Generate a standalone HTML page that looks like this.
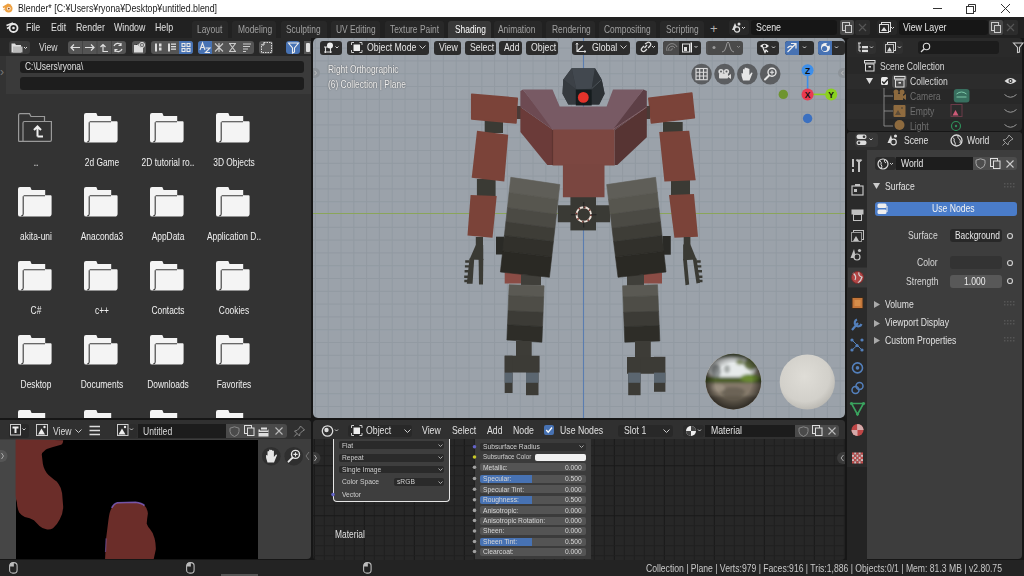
<!DOCTYPE html><html><head><meta charset="utf-8"><style>
*{margin:0;padding:0;box-sizing:border-box}
html,body{width:1024px;height:576px;overflow:hidden;background:#161616;font-family:"Liberation Sans",sans-serif;color:#d9d9d9;font-size:10px}
.a{position:absolute}
.t{position:absolute;white-space:nowrap;line-height:1.15;transform-origin:0 50%}
svg{position:absolute;overflow:visible}
</style></head><body>
<div class="a" style="left:0px;top:0px;width:1024px;height:17px;background:#ffffff;border-radius:0px;"></div>
<svg style="left:2px;top:3px" width="13" height="11" viewBox="0 0 13 11"><circle cx="6.6" cy="5.6" r="3.9" fill="#eea040"/><path d="M1 4.5 L6 1.5 L9 2.5" stroke="#eea040" stroke-width="1.8" fill="none"/><path d="M1.5 7 L3.5 6" stroke="#e8b070" stroke-width="1.2"/><circle cx="6.8" cy="5.6" r="1.9" fill="#fde8d0"/><circle cx="6.8" cy="5.6" r="0.9" fill="#8a4a20"/></svg>
<div class="t" style="left:18px;top:1.8px;font-size:11.5px;color:#1a1a1a;transform:scaleX(0.765);font-weight:normal;">Blender* [C:¥Users¥ryona¥Desktop¥untitled.blend]</div>
<div class="a" style="left:933px;top:7.5px;width:9px;height:1px;background:#333;border-radius:0px;"></div>
<svg style="left:966px;top:4px" width="10" height="10"><rect x="0.5" y="2.5" width="7" height="7" fill="none" stroke="#333"/><path d="M2.5 2.5 V0.5 H9.5 V7.5 H7.5" fill="none" stroke="#333"/></svg>
<svg style="left:1000px;top:3px" width="11" height="11"><path d="M1 1 L10 10 M10 1 L1 10" stroke="#333" stroke-width="1"/></svg>
<div class="a" style="left:0px;top:17px;width:1024px;height:21px;background:#212121;border-radius:0px;"></div>
<svg style="left:6px;top:22px" width="13" height="11" viewBox="0 0 13 11"><circle cx="7.5" cy="6" r="4" fill="none" stroke="#e6e6e6" stroke-width="1.8"/><circle cx="7.5" cy="6" r="1.3" fill="#e6e6e6"/><path d="M0.5 3.5 L7 1 M1 6.5 L4 5" stroke="#e6e6e6" stroke-width="1.6"/></svg>
<div class="t" style="left:26px;top:21.4px;font-size:10.5px;color:#e0e0e0;transform:scaleX(0.84);font-weight:normal;">File</div>
<div class="t" style="left:51px;top:21.4px;font-size:10.5px;color:#e0e0e0;transform:scaleX(0.84);font-weight:normal;">Edit</div>
<div class="t" style="left:76px;top:21.4px;font-size:10.5px;color:#e0e0e0;transform:scaleX(0.84);font-weight:normal;">Render</div>
<div class="t" style="left:114px;top:21.4px;font-size:10.5px;color:#e0e0e0;transform:scaleX(0.84);font-weight:normal;">Window</div>
<div class="t" style="left:155px;top:21.4px;font-size:10.5px;color:#e0e0e0;transform:scaleX(0.84);font-weight:normal;">Help</div>
<div class="a" style="left:192px;top:21px;width:36px;height:17px;background:#282828;border-radius:3px;border-radius:3px 3px 0 0"></div>
<div class="a" style="left:232px;top:21px;width:44px;height:17px;background:#282828;border-radius:3px;border-radius:3px 3px 0 0"></div>
<div class="a" style="left:281px;top:21px;width:46px;height:17px;background:#282828;border-radius:3px;border-radius:3px 3px 0 0"></div>
<div class="a" style="left:331px;top:21px;width:49px;height:17px;background:#282828;border-radius:3px;border-radius:3px 3px 0 0"></div>
<div class="a" style="left:385px;top:21px;width:59px;height:17px;background:#282828;border-radius:3px;border-radius:3px 3px 0 0"></div>
<div class="a" style="left:448px;top:21px;width:43px;height:17px;background:#383838;border-radius:3px;border-radius:3px 3px 0 0"></div>
<div class="a" style="left:494px;top:21px;width:48px;height:17px;background:#282828;border-radius:3px;border-radius:3px 3px 0 0"></div>
<div class="a" style="left:546px;top:21px;width:49px;height:17px;background:#282828;border-radius:3px;border-radius:3px 3px 0 0"></div>
<div class="a" style="left:599px;top:21px;width:57px;height:17px;background:#282828;border-radius:3px;border-radius:3px 3px 0 0"></div>
<div class="a" style="left:660px;top:21px;width:44px;height:17px;background:#282828;border-radius:3px;border-radius:3px 3px 0 0"></div>
<div class="t" style="left:197.3px;top:23.4px;font-size:10.5px;color:#a0a0a0;transform:scaleX(0.8);font-weight:normal;">Layout</div>
<div class="t" style="left:238px;top:23.4px;font-size:10.5px;color:#a0a0a0;transform:scaleX(0.8);font-weight:normal;">Modeling</div>
<div class="t" style="left:286.3px;top:23.4px;font-size:10.5px;color:#a0a0a0;transform:scaleX(0.8);font-weight:normal;">Sculpting</div>
<div class="t" style="left:336px;top:23.4px;font-size:10.5px;color:#a0a0a0;transform:scaleX(0.8);font-weight:normal;">UV Editing</div>
<div class="t" style="left:390px;top:23.4px;font-size:10.5px;color:#a0a0a0;transform:scaleX(0.8);font-weight:normal;">Texture Paint</div>
<div class="t" style="left:455px;top:23.4px;font-size:10.5px;color:#ffffff;transform:scaleX(0.8);font-weight:normal;">Shading</div>
<div class="t" style="left:498px;top:23.4px;font-size:10.5px;color:#a0a0a0;transform:scaleX(0.8);font-weight:normal;">Animation</div>
<div class="t" style="left:551.7px;top:23.4px;font-size:10.5px;color:#a0a0a0;transform:scaleX(0.8);font-weight:normal;">Rendering</div>
<div class="t" style="left:604px;top:23.4px;font-size:10.5px;color:#a0a0a0;transform:scaleX(0.8);font-weight:normal;">Compositing</div>
<div class="t" style="left:665.5px;top:23.4px;font-size:10.5px;color:#a0a0a0;transform:scaleX(0.8);font-weight:normal;">Scripting</div>
<div class="t" style="left:710px;top:21.5px;font-size:13px;color:#b0b0b0;transform:scaleX(1);font-weight:normal;">+</div>
<div class="a" style="left:729px;top:20px;width:20px;height:15px;background:#282828;border-radius:3px;"></div>
<svg style="left:731px;top:22px" width="16" height="11" viewBox="0 0 16 11"><path d="M4 1 L1 8 H7 Z" fill="#ddd"/><circle cx="6" cy="7.5" r="2.6" fill="#282828" stroke="#ddd" stroke-width="1.2"/><circle cx="8" cy="2" r="1.5" fill="#ddd"/><path d="M11 5 L12.5 6.5 L14 5" stroke="#ddd" fill="none"/></svg>
<div class="a" style="left:751px;top:20px;width:86px;height:15px;background:#161616;border-radius:3px;"></div>
<div class="t" style="left:756px;top:21.4px;font-size:10.5px;color:#e6e6e6;transform:scaleX(0.84);font-weight:normal;">Scene</div>
<div class="a" style="left:840px;top:20px;width:14px;height:15px;background:#4a4a4a;border-radius:2px;"></div>
<svg style="left:842px;top:22px" width="11" height="11"><rect x="0.5" y="0.5" width="7" height="8" fill="none" stroke="#ccc"/><rect x="3.5" y="3.5" width="6" height="7" fill="#4a4a4a" stroke="#ccc"/></svg>
<div class="a" style="left:855px;top:20px;width:15px;height:15px;background:#2c2c2c;border-radius:2px;"></div>
<svg style="left:858px;top:23px" width="9" height="9"><path d="M1 1 L8 8 M8 1 L1 8" stroke="#555" stroke-width="1.2"/></svg>
<div class="a" style="left:877px;top:20px;width:20px;height:15px;background:#282828;border-radius:3px;"></div>
<svg style="left:879px;top:22px" width="17" height="11" viewBox="0 0 17 11"><rect x="2.5" y="0.5" width="9" height="9" fill="none" stroke="#ddd"/><rect x="0.5" y="2.5" width="9" height="8" fill="#282828" stroke="#ddd"/><path d="M2 9 L5 5 L8 9Z" fill="#ddd"/><path d="M12 5 L13.5 6.5 L15 5" stroke="#ddd" fill="none"/></svg>
<div class="a" style="left:899px;top:20px;width:89px;height:15px;background:#161616;border-radius:3px;"></div>
<div class="t" style="left:903px;top:21.4px;font-size:10.5px;color:#e6e6e6;transform:scaleX(0.84);font-weight:normal;">View Layer</div>
<div class="a" style="left:989px;top:20px;width:14px;height:15px;background:#4a4a4a;border-radius:2px;"></div>
<svg style="left:991px;top:22px" width="11" height="11"><rect x="0.5" y="0.5" width="7" height="8" fill="none" stroke="#ccc"/><rect x="3.5" y="3.5" width="6" height="7" fill="#4a4a4a" stroke="#ccc"/></svg>
<div class="a" style="left:1003px;top:20px;width:15px;height:15px;background:#2c2c2c;border-radius:2px;"></div>
<svg style="left:1006px;top:23px" width="9" height="9"><path d="M1 1 L8 8 M8 1 L1 8" stroke="#555" stroke-width="1.2"/></svg>
<div class="a" style="left:0px;top:38px;width:311px;height:380px;background:#333333;border-radius:0px;"></div>
<div class="a" style="left:0px;top:38px;width:311px;height:18px;background:#282828;border-radius:0px;"></div>
<div class="a" style="left:9px;top:41px;width:21px;height:13px;background:#3a3a3a;border-radius:3px;"></div>
<svg style="left:11px;top:42px" width="18" height="11" viewBox="0 0 18 11"><path d="M0.5 1.5 H4 L5 3 H10 V10.5 H0.5Z" fill="#ddd"/><path d="M2 4.5 H11.5 V10.5 H2Z" fill="#bbb"/><path d="M13 5 L14.5 6.5 L16 5" stroke="#ddd" fill="none"/></svg>
<div class="t" style="left:39px;top:41.4px;font-size:10.5px;color:#d8d8d8;transform:scaleX(0.82);font-weight:normal;">View</div>
<div class="a" style="left:68px;top:41px;width:58px;height:13px;background:#545454;border-radius:3px;"></div>
<svg style="left:68px;top:41px" width="58" height="13" viewBox="0 0 58 13"><g stroke="#e0e0e0" stroke-width="1.2" fill="none"><path d="M3 6.5 H12 M6 3.5 L3 6.5 L6 9.5"/><path d="M17 6.5 H26 M23 3.5 L26 6.5 L23 9.5"/><path d="M35 3.5 V10.5 H40 M32.5 6 L35 3.5 L37.5 6"/><path d="M46 5 A4 4 0 0 1 53 4 M54 8 A4 4 0 0 1 47 9 M53 2 V4.5 H50.5 M47 11 V8.5 H49.5"/></g><path d="M14.5 0 V13 M29 0 V13 M43.5 0 V13" stroke="#444"/></svg>
<div class="a" style="left:132px;top:41px;width:14px;height:13px;background:#545454;border-radius:3px;"></div>
<svg style="left:133px;top:42px" width="12" height="11" viewBox="0 0 12 11"><rect x="1" y="3.5" width="9" height="7" fill="#ddd"/><path d="M1 3.5 H5 V2" stroke="#ddd"/><circle cx="9" cy="3" r="2.6" fill="#545454" stroke="#ddd"/><path d="M9 1.6 V4.4 M7.6 3 H10.4" stroke="#ddd"/></svg>
<div class="a" style="left:151px;top:41px;width:42px;height:13px;background:#545454;border-radius:3px;"></div>
<div class="a" style="left:179px;top:41px;width:14px;height:13px;background:#4772b3;border-radius:3px;border-radius:0 3px 3px 0"></div>
<svg style="left:151px;top:41px" width="42" height="13" viewBox="0 0 42 13"><g fill="#ddd"><rect x="4" y="2.5" width="2" height="8"/><rect x="8" y="2.5" width="2.5" height="3"/><rect x="8" y="6.5" width="2.5" height="3"/><rect x="17" y="2.5" width="2" height="8"/><rect x="20" y="2.5" width="5" height="1.3"/><rect x="20" y="5" width="5" height="1.3"/><rect x="20" y="7.5" width="5" height="1.3"/></g><g fill="none" stroke="#e8e8e8" stroke-width="1.1"><rect x="31" y="2.5" width="3" height="3"/><rect x="36" y="2.5" width="3" height="3"/><rect x="31" y="7.5" width="3" height="3"/><rect x="36" y="7.5" width="3" height="3"/></g></svg>
<div class="a" style="left:198px;top:41px;width:56px;height:13px;background:#545454;border-radius:3px;"></div>
<div class="a" style="left:198px;top:41px;width:14px;height:13px;background:#4772b3;border-radius:3px;border-radius:3px 0 0 3px"></div>
<svg style="left:198px;top:41px" width="56" height="13" viewBox="0 0 56 13"><g stroke="#e8e8e8" stroke-width="1.1" fill="none"><path d="M2 9 L4.5 2 L7 9 M3 6.5 H6"/><path d="M7.5 7 H12 L7.5 11.5 H12"/><path d="M17 2.5 L25 10.5 M25 2.5 L17 10.5 M21 2 V11" stroke="#ccc"/><path d="M31 2.5 H38 M31 10.5 H38 M31.5 2.5 L37.5 10.5 M37.5 2.5 L31.5 10.5" stroke="#ccc"/><path d="M45 3 H53 M45 5.5 H52 M45 8 H50 M45 10.5 H48" stroke="#ccc"/></g></svg>
<div class="a" style="left:259px;top:41px;width:14px;height:13px;background:#545454;border-radius:3px;"></div>
<svg style="left:261px;top:42px" width="11" height="11"><path d="M3 0.5 H10.5 V10.5 H0.5 V3 Z" fill="none" stroke="#ddd" stroke-dasharray="1.5 1"/><path d="M3 0.5 V3 H0.5" fill="none" stroke="#ddd"/></svg>
<div class="a" style="left:286px;top:41px;width:14px;height:13px;background:#4772b3;border-radius:3px;"></div>
<svg style="left:288px;top:42px" width="11" height="11"><path d="M0.5 1 H10.5 L6.5 6 V10 L4.5 11 V6 Z" fill="none" stroke="#f0f0f0" stroke-width="1.1"/></svg>
<div class="a" style="left:304px;top:41px;width:7px;height:13px;background:#545454;border-radius:0px;"></div>
<div class="a" style="left:306px;top:43px;width:4px;height:9px;background:#e0e0e0;border-radius:1px;"></div>
<div class="a" style="left:0px;top:56px;width:311px;height:38px;background:#3a3a3a;border-radius:0px;"></div>
<div class="a" style="left:20px;top:61px;width:284px;height:12px;background:#1d1d1d;border-radius:3px;"></div>
<div class="t" style="left:25px;top:61.2px;font-size:10px;color:#e0e0e0;transform:scaleX(0.84);font-weight:normal;">C:\Users\ryona\</div>
<div class="a" style="left:20px;top:77px;width:284px;height:13px;background:#1d1d1d;border-radius:3px;"></div>
<div class="a" style="left:0px;top:56px;width:6px;height:38px;background:#333;border-radius:0px;"></div>
<div class="t" style="left:0px;top:66.0px;font-size:12px;color:#777;transform:scaleX(1);font-weight:normal;">&#8250;</div>
<svg style="left:18px;top:112.8px" width="35" height="30" viewBox="0 0 35 30"><g fill="none" stroke="#9a9a9a" stroke-width="1.2"><path d="M0.6 28.4 V2 Q0.6 0.6 2 0.6 H11.5 L13 3.5 H26.5 V8"/><path d="M5 28.4 V10 Q5 8.5 6.5 8.5 H33.4 V27 Q33.4 28.4 32 28.4 H0.6"/></g><path d="M19.5 23.5 V14 M16 17 L19.5 13.5 L23 17 M19.5 23.5 H25" fill="none" stroke="#f0f0f0" stroke-width="2"/></svg>
<div class="t" style="left:-14px;top:156.6px;width:100px;text-align:center;font-size:10px;color:#f0f0f0;transform:scaleX(.84);transform-origin:50% 50%">..</div>
<svg style="left:84px;top:112.8px" width="35" height="30" viewBox="0 0 35 30"><path d="M0 2 Q0 0 2 0 H12.3 L13.6 3 H27.2 V8.2 H32.6 Q33.6 8.2 33.6 9.5 V26.8 Q33.6 29.6 30.8 29.6 H2.2 Q0 29.6 0 27.4 Z" fill="#f4f4f4"/><path d="M5.2 9.2 V27 Q5.2 28.6 3.3 28.9 M5.6 8.7 H27" stroke="#3a3a3a" stroke-width="1.1" fill="none"/></svg>
<div class="t" style="left:52px;top:156.6px;width:100px;text-align:center;font-size:10px;color:#f0f0f0;transform:scaleX(.84);transform-origin:50% 50%">2d Game</div>
<svg style="left:150px;top:112.8px" width="35" height="30" viewBox="0 0 35 30"><path d="M0 2 Q0 0 2 0 H12.3 L13.6 3 H27.2 V8.2 H32.6 Q33.6 8.2 33.6 9.5 V26.8 Q33.6 29.6 30.8 29.6 H2.2 Q0 29.6 0 27.4 Z" fill="#f4f4f4"/><path d="M5.2 9.2 V27 Q5.2 28.6 3.3 28.9 M5.6 8.7 H27" stroke="#3a3a3a" stroke-width="1.1" fill="none"/></svg>
<div class="t" style="left:118px;top:156.6px;width:100px;text-align:center;font-size:10px;color:#f0f0f0;transform:scaleX(.84);transform-origin:50% 50%">2D tutorial ro..</div>
<svg style="left:216px;top:112.8px" width="35" height="30" viewBox="0 0 35 30"><path d="M0 2 Q0 0 2 0 H12.3 L13.6 3 H27.2 V8.2 H32.6 Q33.6 8.2 33.6 9.5 V26.8 Q33.6 29.6 30.8 29.6 H2.2 Q0 29.6 0 27.4 Z" fill="#f4f4f4"/><path d="M5.2 9.2 V27 Q5.2 28.6 3.3 28.9 M5.6 8.7 H27" stroke="#3a3a3a" stroke-width="1.1" fill="none"/></svg>
<div class="t" style="left:184px;top:156.6px;width:100px;text-align:center;font-size:10px;color:#f0f0f0;transform:scaleX(.84);transform-origin:50% 50%">3D Objects</div>
<svg style="left:18px;top:187px" width="35" height="30" viewBox="0 0 35 30"><path d="M0 2 Q0 0 2 0 H12.3 L13.6 3 H27.2 V8.2 H32.6 Q33.6 8.2 33.6 9.5 V26.8 Q33.6 29.6 30.8 29.6 H2.2 Q0 29.6 0 27.4 Z" fill="#f4f4f4"/><path d="M5.2 9.2 V27 Q5.2 28.6 3.3 28.9 M5.6 8.7 H27" stroke="#3a3a3a" stroke-width="1.1" fill="none"/></svg>
<div class="t" style="left:-14px;top:230.8px;width:100px;text-align:center;font-size:10px;color:#f0f0f0;transform:scaleX(.84);transform-origin:50% 50%">akita-uni</div>
<svg style="left:84px;top:187px" width="35" height="30" viewBox="0 0 35 30"><path d="M0 2 Q0 0 2 0 H12.3 L13.6 3 H27.2 V8.2 H32.6 Q33.6 8.2 33.6 9.5 V26.8 Q33.6 29.6 30.8 29.6 H2.2 Q0 29.6 0 27.4 Z" fill="#f4f4f4"/><path d="M5.2 9.2 V27 Q5.2 28.6 3.3 28.9 M5.6 8.7 H27" stroke="#3a3a3a" stroke-width="1.1" fill="none"/></svg>
<div class="t" style="left:52px;top:230.8px;width:100px;text-align:center;font-size:10px;color:#f0f0f0;transform:scaleX(.84);transform-origin:50% 50%">Anaconda3</div>
<svg style="left:150px;top:187px" width="35" height="30" viewBox="0 0 35 30"><path d="M0 2 Q0 0 2 0 H12.3 L13.6 3 H27.2 V8.2 H32.6 Q33.6 8.2 33.6 9.5 V26.8 Q33.6 29.6 30.8 29.6 H2.2 Q0 29.6 0 27.4 Z" fill="#f4f4f4"/><path d="M5.2 9.2 V27 Q5.2 28.6 3.3 28.9 M5.6 8.7 H27" stroke="#3a3a3a" stroke-width="1.1" fill="none"/></svg>
<div class="t" style="left:118px;top:230.8px;width:100px;text-align:center;font-size:10px;color:#f0f0f0;transform:scaleX(.84);transform-origin:50% 50%">AppData</div>
<svg style="left:216px;top:187px" width="35" height="30" viewBox="0 0 35 30"><path d="M0 2 Q0 0 2 0 H12.3 L13.6 3 H27.2 V8.2 H32.6 Q33.6 8.2 33.6 9.5 V26.8 Q33.6 29.6 30.8 29.6 H2.2 Q0 29.6 0 27.4 Z" fill="#f4f4f4"/><path d="M5.2 9.2 V27 Q5.2 28.6 3.3 28.9 M5.6 8.7 H27" stroke="#3a3a3a" stroke-width="1.1" fill="none"/></svg>
<div class="t" style="left:184px;top:230.8px;width:100px;text-align:center;font-size:10px;color:#f0f0f0;transform:scaleX(.84);transform-origin:50% 50%">Application D..</div>
<svg style="left:18px;top:261.2px" width="35" height="30" viewBox="0 0 35 30"><path d="M0 2 Q0 0 2 0 H12.3 L13.6 3 H27.2 V8.2 H32.6 Q33.6 8.2 33.6 9.5 V26.8 Q33.6 29.6 30.8 29.6 H2.2 Q0 29.6 0 27.4 Z" fill="#f4f4f4"/><path d="M5.2 9.2 V27 Q5.2 28.6 3.3 28.9 M5.6 8.7 H27" stroke="#3a3a3a" stroke-width="1.1" fill="none"/></svg>
<div class="t" style="left:-14px;top:305.0px;width:100px;text-align:center;font-size:10px;color:#f0f0f0;transform:scaleX(.84);transform-origin:50% 50%">C#</div>
<svg style="left:84px;top:261.2px" width="35" height="30" viewBox="0 0 35 30"><path d="M0 2 Q0 0 2 0 H12.3 L13.6 3 H27.2 V8.2 H32.6 Q33.6 8.2 33.6 9.5 V26.8 Q33.6 29.6 30.8 29.6 H2.2 Q0 29.6 0 27.4 Z" fill="#f4f4f4"/><path d="M5.2 9.2 V27 Q5.2 28.6 3.3 28.9 M5.6 8.7 H27" stroke="#3a3a3a" stroke-width="1.1" fill="none"/></svg>
<div class="t" style="left:52px;top:305.0px;width:100px;text-align:center;font-size:10px;color:#f0f0f0;transform:scaleX(.84);transform-origin:50% 50%">c++</div>
<svg style="left:150px;top:261.2px" width="35" height="30" viewBox="0 0 35 30"><path d="M0 2 Q0 0 2 0 H12.3 L13.6 3 H27.2 V8.2 H32.6 Q33.6 8.2 33.6 9.5 V26.8 Q33.6 29.6 30.8 29.6 H2.2 Q0 29.6 0 27.4 Z" fill="#f4f4f4"/><path d="M5.2 9.2 V27 Q5.2 28.6 3.3 28.9 M5.6 8.7 H27" stroke="#3a3a3a" stroke-width="1.1" fill="none"/></svg>
<div class="t" style="left:118px;top:305.0px;width:100px;text-align:center;font-size:10px;color:#f0f0f0;transform:scaleX(.84);transform-origin:50% 50%">Contacts</div>
<svg style="left:216px;top:261.2px" width="35" height="30" viewBox="0 0 35 30"><path d="M0 2 Q0 0 2 0 H12.3 L13.6 3 H27.2 V8.2 H32.6 Q33.6 8.2 33.6 9.5 V26.8 Q33.6 29.6 30.8 29.6 H2.2 Q0 29.6 0 27.4 Z" fill="#f4f4f4"/><path d="M5.2 9.2 V27 Q5.2 28.6 3.3 28.9 M5.6 8.7 H27" stroke="#3a3a3a" stroke-width="1.1" fill="none"/></svg>
<div class="t" style="left:184px;top:305.0px;width:100px;text-align:center;font-size:10px;color:#f0f0f0;transform:scaleX(.84);transform-origin:50% 50%">Cookies</div>
<svg style="left:18px;top:335.4px" width="35" height="30" viewBox="0 0 35 30"><path d="M0 2 Q0 0 2 0 H12.3 L13.6 3 H27.2 V8.2 H32.6 Q33.6 8.2 33.6 9.5 V26.8 Q33.6 29.6 30.8 29.6 H2.2 Q0 29.6 0 27.4 Z" fill="#f4f4f4"/><path d="M5.2 9.2 V27 Q5.2 28.6 3.3 28.9 M5.6 8.7 H27" stroke="#3a3a3a" stroke-width="1.1" fill="none"/></svg>
<div class="t" style="left:-14px;top:379.2px;width:100px;text-align:center;font-size:10px;color:#f0f0f0;transform:scaleX(.84);transform-origin:50% 50%">Desktop</div>
<svg style="left:84px;top:335.4px" width="35" height="30" viewBox="0 0 35 30"><path d="M0 2 Q0 0 2 0 H12.3 L13.6 3 H27.2 V8.2 H32.6 Q33.6 8.2 33.6 9.5 V26.8 Q33.6 29.6 30.8 29.6 H2.2 Q0 29.6 0 27.4 Z" fill="#f4f4f4"/><path d="M5.2 9.2 V27 Q5.2 28.6 3.3 28.9 M5.6 8.7 H27" stroke="#3a3a3a" stroke-width="1.1" fill="none"/></svg>
<div class="t" style="left:52px;top:379.2px;width:100px;text-align:center;font-size:10px;color:#f0f0f0;transform:scaleX(.84);transform-origin:50% 50%">Documents</div>
<svg style="left:150px;top:335.4px" width="35" height="30" viewBox="0 0 35 30"><path d="M0 2 Q0 0 2 0 H12.3 L13.6 3 H27.2 V8.2 H32.6 Q33.6 8.2 33.6 9.5 V26.8 Q33.6 29.6 30.8 29.6 H2.2 Q0 29.6 0 27.4 Z" fill="#f4f4f4"/><path d="M5.2 9.2 V27 Q5.2 28.6 3.3 28.9 M5.6 8.7 H27" stroke="#3a3a3a" stroke-width="1.1" fill="none"/></svg>
<div class="t" style="left:118px;top:379.2px;width:100px;text-align:center;font-size:10px;color:#f0f0f0;transform:scaleX(.84);transform-origin:50% 50%">Downloads</div>
<svg style="left:216px;top:335.4px" width="35" height="30" viewBox="0 0 35 30"><path d="M0 2 Q0 0 2 0 H12.3 L13.6 3 H27.2 V8.2 H32.6 Q33.6 8.2 33.6 9.5 V26.8 Q33.6 29.6 30.8 29.6 H2.2 Q0 29.6 0 27.4 Z" fill="#f4f4f4"/><path d="M5.2 9.2 V27 Q5.2 28.6 3.3 28.9 M5.6 8.7 H27" stroke="#3a3a3a" stroke-width="1.1" fill="none"/></svg>
<div class="t" style="left:184px;top:379.2px;width:100px;text-align:center;font-size:10px;color:#f0f0f0;transform:scaleX(.84);transform-origin:50% 50%">Favorites</div>
<svg style="left:18px;top:409.6px" width="35" height="30" viewBox="0 0 35 30"><path d="M0 2 Q0 0 2 0 H12.3 L13.6 3 H27.2 V8.2 H32.6 Q33.6 8.2 33.6 9.5 V26.8 Q33.6 29.6 30.8 29.6 H2.2 Q0 29.6 0 27.4 Z" fill="#f4f4f4"/><path d="M5.2 9.2 V27 Q5.2 28.6 3.3 28.9 M5.6 8.7 H27" stroke="#3a3a3a" stroke-width="1.1" fill="none"/></svg>
<svg style="left:84px;top:409.6px" width="35" height="30" viewBox="0 0 35 30"><path d="M0 2 Q0 0 2 0 H12.3 L13.6 3 H27.2 V8.2 H32.6 Q33.6 8.2 33.6 9.5 V26.8 Q33.6 29.6 30.8 29.6 H2.2 Q0 29.6 0 27.4 Z" fill="#f4f4f4"/><path d="M5.2 9.2 V27 Q5.2 28.6 3.3 28.9 M5.6 8.7 H27" stroke="#3a3a3a" stroke-width="1.1" fill="none"/></svg>
<svg style="left:150px;top:409.6px" width="35" height="30" viewBox="0 0 35 30"><path d="M0 2 Q0 0 2 0 H12.3 L13.6 3 H27.2 V8.2 H32.6 Q33.6 8.2 33.6 9.5 V26.8 Q33.6 29.6 30.8 29.6 H2.2 Q0 29.6 0 27.4 Z" fill="#f4f4f4"/><path d="M5.2 9.2 V27 Q5.2 28.6 3.3 28.9 M5.6 8.7 H27" stroke="#3a3a3a" stroke-width="1.1" fill="none"/></svg>
<svg style="left:216px;top:409.6px" width="35" height="30" viewBox="0 0 35 30"><path d="M0 2 Q0 0 2 0 H12.3 L13.6 3 H27.2 V8.2 H32.6 Q33.6 8.2 33.6 9.5 V26.8 Q33.6 29.6 30.8 29.6 H2.2 Q0 29.6 0 27.4 Z" fill="#f4f4f4"/><path d="M5.2 9.2 V27 Q5.2 28.6 3.3 28.9 M5.6 8.7 H27" stroke="#3a3a3a" stroke-width="1.1" fill="none"/></svg>
<div class="a" style="left:0px;top:417.6px;width:312px;height:3px;background:#161616;border-radius:0px;"></div>
<div class="a" style="left:313px;top:38px;width:532px;height:380px;border-radius:5px;overflow:hidden;background:#9ba2aa"><svg style="left:-313px;top:-38px" width="1024" height="576"><path d="M315.4 38 V418" stroke="#929aa2" stroke-width="1"/><path d="M328.2 38 V418" stroke="#929aa2" stroke-width="1"/><path d="M341.0 38 V418" stroke="#929aa2" stroke-width="1"/><path d="M353.8 38 V418" stroke="#929aa2" stroke-width="1"/><path d="M366.6 38 V418" stroke="#929aa2" stroke-width="1"/><path d="M379.4 38 V418" stroke="#929aa2" stroke-width="1"/><path d="M392.2 38 V418" stroke="#929aa2" stroke-width="1"/><path d="M405.0 38 V418" stroke="#929aa2" stroke-width="1"/><path d="M417.8 38 V418" stroke="#929aa2" stroke-width="1"/><path d="M430.6 38 V418" stroke="#929aa2" stroke-width="1"/><path d="M443.4 38 V418" stroke="#929aa2" stroke-width="1"/><path d="M456.2 38 V418" stroke="#929aa2" stroke-width="1"/><path d="M469.0 38 V418" stroke="#929aa2" stroke-width="1"/><path d="M481.8 38 V418" stroke="#929aa2" stroke-width="1"/><path d="M494.6 38 V418" stroke="#929aa2" stroke-width="1"/><path d="M507.4 38 V418" stroke="#929aa2" stroke-width="1"/><path d="M520.2 38 V418" stroke="#929aa2" stroke-width="1"/><path d="M533.0 38 V418" stroke="#929aa2" stroke-width="1"/><path d="M545.8 38 V418" stroke="#929aa2" stroke-width="1"/><path d="M558.6 38 V418" stroke="#929aa2" stroke-width="1"/><path d="M571.4 38 V418" stroke="#929aa2" stroke-width="1"/><path d="M597.0 38 V418" stroke="#929aa2" stroke-width="1"/><path d="M609.8 38 V418" stroke="#929aa2" stroke-width="1"/><path d="M622.6 38 V418" stroke="#929aa2" stroke-width="1"/><path d="M635.4 38 V418" stroke="#929aa2" stroke-width="1"/><path d="M648.2 38 V418" stroke="#929aa2" stroke-width="1"/><path d="M661.0 38 V418" stroke="#929aa2" stroke-width="1"/><path d="M673.8 38 V418" stroke="#929aa2" stroke-width="1"/><path d="M686.6 38 V418" stroke="#929aa2" stroke-width="1"/><path d="M699.4 38 V418" stroke="#929aa2" stroke-width="1"/><path d="M712.2 38 V418" stroke="#929aa2" stroke-width="1"/><path d="M725.0 38 V418" stroke="#929aa2" stroke-width="1"/><path d="M737.8 38 V418" stroke="#929aa2" stroke-width="1"/><path d="M750.6 38 V418" stroke="#929aa2" stroke-width="1"/><path d="M763.4 38 V418" stroke="#929aa2" stroke-width="1"/><path d="M776.2 38 V418" stroke="#929aa2" stroke-width="1"/><path d="M789.0 38 V418" stroke="#929aa2" stroke-width="1"/><path d="M801.8 38 V418" stroke="#929aa2" stroke-width="1"/><path d="M814.6 38 V418" stroke="#929aa2" stroke-width="1"/><path d="M827.4 38 V418" stroke="#929aa2" stroke-width="1"/><path d="M840.2 38 V418" stroke="#929aa2" stroke-width="1"/><path d="M313 48.1 H845" stroke="#929aa2" stroke-width="1"/><path d="M313 60.9 H845" stroke="#929aa2" stroke-width="1"/><path d="M313 73.7 H845" stroke="#929aa2" stroke-width="1"/><path d="M313 86.5 H845" stroke="#929aa2" stroke-width="1"/><path d="M313 99.3 H845" stroke="#929aa2" stroke-width="1"/><path d="M313 112.1 H845" stroke="#929aa2" stroke-width="1"/><path d="M313 124.9 H845" stroke="#929aa2" stroke-width="1"/><path d="M313 137.7 H845" stroke="#929aa2" stroke-width="1"/><path d="M313 150.5 H845" stroke="#929aa2" stroke-width="1"/><path d="M313 163.3 H845" stroke="#929aa2" stroke-width="1"/><path d="M313 176.1 H845" stroke="#929aa2" stroke-width="1"/><path d="M313 188.9 H845" stroke="#929aa2" stroke-width="1"/><path d="M313 201.7 H845" stroke="#929aa2" stroke-width="1"/><path d="M313 227.3 H845" stroke="#929aa2" stroke-width="1"/><path d="M313 240.1 H845" stroke="#929aa2" stroke-width="1"/><path d="M313 252.9 H845" stroke="#929aa2" stroke-width="1"/><path d="M313 265.7 H845" stroke="#929aa2" stroke-width="1"/><path d="M313 278.5 H845" stroke="#929aa2" stroke-width="1"/><path d="M313 291.3 H845" stroke="#929aa2" stroke-width="1"/><path d="M313 304.1 H845" stroke="#929aa2" stroke-width="1"/><path d="M313 316.9 H845" stroke="#929aa2" stroke-width="1"/><path d="M313 329.7 H845" stroke="#929aa2" stroke-width="1"/><path d="M313 342.5 H845" stroke="#929aa2" stroke-width="1"/><path d="M313 355.3 H845" stroke="#929aa2" stroke-width="1"/><path d="M313 368.1 H845" stroke="#929aa2" stroke-width="1"/><path d="M313 380.9 H845" stroke="#929aa2" stroke-width="1"/><path d="M313 393.7 H845" stroke="#929aa2" stroke-width="1"/><path d="M313 406.5 H845" stroke="#929aa2" stroke-width="1"/><path d="M313 213.5 H845" stroke="#8aa55a" stroke-width="1.2"/><path d="M583.5 38 V418" stroke="#5a7db0" stroke-width="1.1"/></svg></div>
<svg style="left:0;top:0" width="1024" height="576"><polygon points="484.7,120.0 503.0,120.0 503.0,133.0 484.7,133.0" fill="#3a3a34" /><polygon points="471.7,94.3 517.3,98.2 516.0,123.0 471.7,119.0" fill="#7b4339" stroke="#7b4339" stroke-width="1.5" stroke-linejoin="round"/><polygon points="517.0,106.0 521.5,106.0 521.5,119.0 517.0,119.0" fill="#4a3a36" /><polygon points="476.9,179.0 495.6,179.0 495.6,196.0 476.9,196.0" fill="#3a3a34" /><polygon points="477.0,130.8 508.2,134.7 504.3,181.6 471.7,177.7" fill="#7b4339" /><polygon points="470.6,195.0 496.7,196.0 492.5,237.7 467.5,235.6" fill="#7b4339" /><polygon points="475.8,237.0 483.0,237.0 483.0,245.5 475.8,245.5" fill="#3a3a34" /><polygon points="475.8,245.0 483.2,245.0 483.3,260.0 469.5,259.5" fill="#3a3a34" /><polygon points="469.5,258.5 474.2,258.5 472.6,283.8 466.8,283.8" fill="#3a3a34" /><polygon points="478.6,259.0 483.3,259.0 483.0,284.6 479.0,284.6" fill="#3a3a34" /><path d="M469.5 261.5 h-4.3 M469.2 266.4 h-4.3 M468.9 271.2 h-4.3 M468.5 276.7 h-4.3 M468.3 281 h-4" stroke="#3a3a34" stroke-width="2.4"/><polygon points="663.0,122.0 682.7,122.0 682.7,134.0 663.0,134.0" fill="#3a3a34" /><polygon points="648.8,98.2 691.8,93.0 694.4,117.8 651.4,123.0" fill="#7b4339" stroke="#7b4339" stroke-width="1.5" stroke-linejoin="round"/><polygon points="645.5,106.0 650.0,106.0 650.0,119.0 645.5,119.0" fill="#4a3a36" /><polygon points="671.0,180.0 690.0,180.0 690.0,196.0 671.0,196.0" fill="#3a3a34" /><polygon points="659.2,132.0 689.2,130.8 695.7,180.3 664.4,181.6" fill="#7b4339" /><polygon points="669.0,195.0 694.0,194.0 698.0,236.7 674.4,237.7" fill="#7b4339" /><polygon points="683.7,237.0 690.4,237.0 690.4,245.0 683.7,245.0" fill="#3a3a34" /><polygon points="683.1,244.5 690.4,244.5 696.5,259.5 683.1,260.3" fill="#3a3a34" /><polygon points="683.1,259.0 686.8,259.0 689.2,284.6 685.5,285.2" fill="#3a3a34" /><polygon points="692.8,258.5 696.5,258.5 700.1,282.8 696.5,283.4" fill="#3a3a34" /><path d="M696.5 261.5 h4.2 M697 266.4 h4.3 M697.5 271.2 h4.5 M698 276.7 h4.4 M698.3 281 h4.2" stroke="#3a3a34" stroke-width="2.4"/><polygon points="557.8,205.2 610.0,205.2 610.0,222.2 557.8,222.2" fill="#3a3a35" /><polygon points="570.4,196.0 596.0,196.0 596.0,230.4 570.4,230.4" fill="#383833" /><polygon points="504.7,272.3 522.7,272.3 522.7,283.5 504.7,283.5" fill="#8a4c45" /><polygon points="521.0,274.5 541.0,274.5 541.0,285.5 521.0,285.5" fill="#403f3a" /><polygon points="496.0,236.7 504.0,236.7 504.0,254.5 496.0,254.5" fill="#2a2a26" /><polygon points="510.8,177.3 559.8,184.6 558.1,199.4 509.1,192.5" fill="#5f5e58" stroke="#5f5e58" stroke-width="0.6"/><polygon points="509.1,192.5 558.1,199.4 556.5,214.3 507.5,207.6" fill="#57564f" stroke="#57564f" stroke-width="0.6"/><polygon points="507.5,207.6 556.5,214.3 554.9,228.2 505.9,221.8" fill="#4b4a44" stroke="#4b4a44" stroke-width="0.6"/><polygon points="505.9,221.8 554.9,228.2 553.4,241.6 504.4,235.5" fill="#3e3d37" stroke="#3e3d37" stroke-width="0.6"/><polygon points="504.4,235.5 553.4,241.6 551.7,256.9 502.7,251.2" fill="#31302b" stroke="#31302b" stroke-width="0.6"/><polygon points="502.7,251.2 551.7,256.9 549.4,277.3 500.4,272.0" fill="#2a2924" stroke="#2a2924" stroke-width="0.6"/><polygon points="509.2,284.7 544.1,285.8 543.7,296.9 508.7,295.5" fill="#5a5953" stroke="#5a5953" stroke-width="0.6"/><polygon points="508.7,295.5 543.7,296.9 543.1,312.3 508.1,310.7" fill="#4e4d47" stroke="#4e4d47" stroke-width="0.6"/><polygon points="508.1,310.7 543.1,312.3 542.5,326.7 507.5,324.8" fill="#3c3b36" stroke="#3c3b36" stroke-width="0.6"/><polygon points="507.5,324.8 542.5,326.7 541.9,342.2 506.9,340.0" fill="#2e2d28" stroke="#2e2d28" stroke-width="0.6"/><polygon points="516.0,341.0 531.7,341.0 531.7,357.0 516.0,357.0" fill="#3d3c37" /><polygon points="504.7,355.7 539.6,355.7 539.6,372.6 504.7,372.6" fill="#3c3b36" /><polygon points="504.7,355.7 512.6,355.7 512.6,393.0 504.7,393.0" fill="#3c3b36" /><polygon points="526.0,359.0 538.5,359.0 538.5,395.2 526.0,395.2" fill="#3c3b36" /><polygon points="504.7,372.6 512.6,372.6 512.6,382.8 504.7,382.8" fill="#5b6670" /><polygon points="526.0,372.6 538.5,372.6 538.5,382.8 526.0,382.8" fill="#5b6670" /><polygon points="642.9,272.3 662.0,272.3 662.0,283.5 642.9,283.5" fill="#8a4c45" /><polygon points="627.0,274.5 644.0,274.5 644.0,285.8 627.0,285.8" fill="#403f3a" /><polygon points="662.5,236.0 670.8,236.0 670.8,254.7 662.5,254.7" fill="#2a2a26" /><polygon points="606.7,184.6 655.6,177.3 657.3,192.5 608.5,199.4" fill="#5f5e58" stroke="#5f5e58" stroke-width="0.6"/><polygon points="608.5,199.4 657.3,192.5 658.9,207.6 610.3,214.3" fill="#57564f" stroke="#57564f" stroke-width="0.6"/><polygon points="610.3,214.3 658.9,207.6 660.5,221.8 612.0,228.2" fill="#4b4a44" stroke="#4b4a44" stroke-width="0.6"/><polygon points="612.0,228.2 660.5,221.8 662.0,235.5 613.6,241.6" fill="#3e3d37" stroke="#3e3d37" stroke-width="0.6"/><polygon points="613.6,241.6 662.0,235.5 663.7,251.2 615.5,256.9" fill="#31302b" stroke="#31302b" stroke-width="0.6"/><polygon points="615.5,256.9 663.7,251.2 666.0,272.0 618.0,277.3" fill="#2a2924" stroke="#2a2924" stroke-width="0.6"/><polygon points="622.6,285.8 657.5,284.7 658.0,295.7 623.0,296.9" fill="#5a5953" stroke="#5a5953" stroke-width="0.6"/><polygon points="623.0,296.9 658.0,295.7 658.6,311.2 623.6,312.3" fill="#4e4d47" stroke="#4e4d47" stroke-width="0.6"/><polygon points="623.6,312.3 658.6,311.2 659.2,325.5 624.2,326.7" fill="#3c3b36" stroke="#3c3b36" stroke-width="0.6"/><polygon points="624.2,326.7 659.2,325.5 659.8,341.0 624.8,342.2" fill="#2e2d28" stroke="#2e2d28" stroke-width="0.6"/><polygon points="635.0,341.0 650.8,341.0 650.8,358.0 635.0,358.0" fill="#3d3c37" /><polygon points="627.0,357.0 662.0,357.0 662.0,373.8 627.0,373.8" fill="#3c3b36" /><polygon points="628.2,359.0 640.6,359.0 640.6,395.2 628.2,395.2" fill="#3c3b36" /><polygon points="654.0,356.8 665.4,356.8 665.4,391.8 654.0,391.8" fill="#3c3b36" /><polygon points="628.2,372.6 640.6,372.6 640.6,382.8 628.2,382.8" fill="#5b6670" /><polygon points="654.0,372.6 665.4,372.6 665.4,382.8 654.0,382.8" fill="#5b6670" /><polygon points="571.7,68.3 595.0,68.3 601.7,79.5 604.6,93.7 599.2,104.5 568.3,104.5 562.5,93.7 563.3,79.5" fill="#33383d" /><polygon points="571.7,68.3 595.0,68.3 591.7,88.7 576.2,89.5" fill="#42484f" /><polygon points="571.7,68.3 563.3,79.5 576.2,89.5" fill="#3c4147" /><polygon points="563.3,79.5 562.5,93.7 568.3,104.5 575.8,104.5 576.2,89.5" fill="#353a3f" /><polygon points="595.0,68.3 601.7,79.5 591.7,88.7" fill="#30353a" /><polygon points="601.7,79.5 604.6,93.7 599.2,104.5 590.8,104.5 591.7,88.7" fill="#2b3034" /><path d="M591.7 88.7 L601.7 79.5" stroke="#596066" stroke-width="0.7"/><polygon points="575.8,89.5 591.7,89.5 591.7,105.5 575.8,105.5" fill="#151c1e" /><circle cx="583.3" cy="97.4" r="5.4" fill="#e3332b"/><polygon points="552.5,128.0 614.7,128.0 614.7,165.5 552.5,165.5" fill="#7c4741" /><polygon points="562.9,164.0 604.5,164.0 604.5,197.2 562.9,197.2" fill="#7a4640" /><polygon points="520.4,106.9 552.5,129.5 552.5,165.0 547.3,165.0 520.4,132.0" fill="#6b3b39" /><polygon points="523.0,89.5 552.5,127.0 552.5,129.5 520.4,107.0 520.4,91.0" fill="#6d4a52" /><polygon points="646.8,107.0 614.7,130.0 614.7,165.0 617.3,165.0 646.8,137.3" fill="#573433" /><polygon points="643.4,89.5 613.0,127.0 614.7,130.0 646.8,107.0 646.8,91.0" fill="#5d3f46" /><polygon points="523.0,89.5 552.5,89.5 559.7,106.4 606.6,106.4 613.0,89.5 643.4,89.5 613.0,129.5 552.5,129.5" fill="#785a64" /><path d="M613 129.5 L646.8 107" stroke="#8a6a70" stroke-width="0.8"/><path d="M552.5 130 V165" stroke="#5e3431" stroke-width="1.2"/><circle cx="583.75" cy="214.5" r="7.3" fill="none" stroke="#eee4dc" stroke-width="1.9"/><circle cx="583.75" cy="214.5" r="7.3" fill="none" stroke="#7a3a32" stroke-width="1.9" stroke-dasharray="1.6 4.13"/><path d="M571 214.8 h6 M590.5 214.8 h6 M583.75 202 v6 M583.75 221.5 v6" stroke="#222" stroke-width="1"/></svg>
<div class="t" style="left:328px;top:63.4px;font-size:10.5px;color:#f2f2f2;transform:scaleX(0.8);font-weight:normal;text-shadow:0 0 1.5px #333">Right Orthographic</div><div class="t" style="left:328px;top:78.4px;font-size:10.5px;color:#f2f2f2;transform:scaleX(0.8);font-weight:normal;text-shadow:0 0 1.5px #333">(6) Collection | Plane</div>
<div class="a" style="left:320px;top:40.5px;width:22px;height:14px;background:#2c2c2c;border-radius:3px;"></div>
<svg style="left:322px;top:41px" width="20" height="13" viewBox="0 0 20 13"><path d="M2 6 H10 M2 11 H10 M3.5 6 V12 M8.5 6 V12" stroke="#ddd" stroke-width="1.1"/><circle cx="8" cy="4.5" r="3" fill="#eee"/><path d="M13.5 5.5 L15 7 L16.5 5.5" stroke="#ddd" fill="none"/></svg>
<div class="a" style="left:347px;top:40.5px;width:81.5px;height:14px;background:#2c2c2c;border-radius:3px;"></div>
<svg style="left:351px;top:42px" width="12" height="11"><path d="M0.5 3 V0.5 H3 M8.5 0.5 H11 V3 M11 8 V10.5 H8.5 M3 10.5 H0.5 V8" stroke="#ccc" fill="none"/><rect x="2.5" y="2.5" width="6.5" height="6.5" fill="#eee"/></svg>
<div class="t" style="left:367px;top:41.4px;font-size:10.5px;color:#e6e6e6;transform:scaleX(0.83);font-weight:normal;">Object Mode</div>
<svg style="left:419px;top:45px" width="7" height="5"><path d="M0.5 0.5 L3.5 3.5 L6.5 0.5" stroke="#ccc" fill="none"/></svg>
<div class="a" style="left:434.3px;top:40.5px;width:27.19999999999999px;height:14px;background:#2c2c2c;border-radius:3px;"></div>
<div class="t" style="left:439.3px;top:41.4px;font-size:10.5px;color:#e6e6e6;transform:scaleX(0.83);font-weight:normal;">View</div>
<div class="a" style="left:464.5px;top:40.5px;width:31.5px;height:14px;background:#2c2c2c;border-radius:3px;"></div>
<div class="t" style="left:469.5px;top:41.4px;font-size:10.5px;color:#e6e6e6;transform:scaleX(0.83);font-weight:normal;">Select</div>
<div class="a" style="left:499px;top:40.5px;width:23.399999999999977px;height:14px;background:#2c2c2c;border-radius:3px;"></div>
<div class="t" style="left:504px;top:41.4px;font-size:10.5px;color:#e6e6e6;transform:scaleX(0.83);font-weight:normal;">Add</div>
<div class="a" style="left:525.7px;top:40.5px;width:32.299999999999955px;height:14px;background:#2c2c2c;border-radius:3px;"></div>
<div class="t" style="left:530.7px;top:41.4px;font-size:10.5px;color:#e6e6e6;transform:scaleX(0.83);font-weight:normal;">Object</div>
<div class="a" style="left:572px;top:40.5px;width:58.39999999999998px;height:14px;background:#2c2c2c;border-radius:3px;"></div>
<svg style="left:575px;top:42px" width="12" height="11"><path d="M2 1 V9.5 H11 M2 9.5 L8 3.5" stroke="#ddd" fill="none" stroke-width="1.1"/><path d="M1 2.5 L2 1 L3 2.5 M9.5 8.5 L11 9.5 L9.5 10.5" stroke="#ddd" fill="none"/></svg>
<div class="t" style="left:592px;top:41.4px;font-size:10.5px;color:#e6e6e6;transform:scaleX(0.83);font-weight:normal;">Global</div>
<svg style="left:620px;top:45px" width="7" height="5"><path d="M0.5 0.5 L3.5 3.5 L6.5 0.5" stroke="#ccc" fill="none"/></svg>
<div class="a" style="left:636px;top:40.5px;width:22.200000000000045px;height:14px;background:#2c2c2c;border-radius:3px;"></div>
<svg style="left:639px;top:42px" width="18" height="11" viewBox="0 0 18 11"><path d="M5 4 L3 6 A2 2 0 0 0 6 9 L8 7 M6 2 L8 0.8 A2 2 0 0 1 11 4 L9 6 M5.5 6 L8 3" stroke="#ddd" fill="none" stroke-width="1.2"/><path d="M13 4 L14.5 5.5 L16 4" stroke="#ddd" fill="none"/></svg>
<div class="a" style="left:663px;top:40.5px;width:38.39999999999998px;height:14px;background:#2c2c2c;border-radius:3px;"></div>
<div class="a" style="left:663px;top:40.5px;width:16px;height:14px;background:#4a4a4a;border-radius:3px;border-radius:3px 0 0 3px"></div>
<svg style="left:665px;top:42px" width="36" height="11" viewBox="0 0 36 11"><path d="M2 9 A5 5 0 0 1 12 5 M4 9 A3 3 0 0 1 10 6 M6 9 A1.5 1.5 0 0 1 8 7" stroke="#888" fill="none"/><rect x="17.5" y="2" width="7" height="8" fill="none" stroke="#ddd"/><rect x="19" y="5" width="3" height="4" fill="#ddd"/><rect x="25.5" y="0.5" width="1.5" height="10" fill="#eee"/><path d="M29.5 4 L31 5.5 L32.5 4" stroke="#ddd" fill="none"/></svg>
<div class="a" style="left:705.5px;top:40.5px;width:37.5px;height:14px;background:#4a4a4a;border-radius:3px;"></div>
<svg style="left:707px;top:42px" width="36" height="11" viewBox="0 0 36 11"><circle cx="7" cy="5.5" r="1.5" fill="#999"/><path d="M0 0 V11" stroke="#555"/><path d="M15 10 Q18 10 19 5 Q20 0 21 0 Q22 0 23 5 Q24 10 27 10" stroke="#999" fill="none"/><path d="M30 4 L31.5 5.5 L33 4" stroke="#888" fill="none"/></svg>
<div class="a" style="left:757px;top:40.5px;width:22.299999999999955px;height:14px;background:#2c2c2c;border-radius:3px;"></div>
<svg style="left:759px;top:42px" width="19" height="11" viewBox="0 0 19 11"><path d="M1 4 Q5.5 -0.5 10 4 Q5.5 8.5 1 4Z" fill="#eee"/><circle cx="5.5" cy="4" r="1.6" fill="#2c2c2c"/><path d="M4 6 L6 10.5 L7 8 L9 10" stroke="#eee" fill="none" stroke-width="1.2"/><path d="M13 4.5 L14.5 6 L16 4.5" stroke="#ddd" fill="none"/></svg>
<div class="a" style="left:784.9px;top:40.5px;width:29.100000000000023px;height:14px;background:#2c2c2c;border-radius:3px;"></div>
<div class="a" style="left:784.9px;top:40.5px;width:14px;height:14px;background:#4772b3;border-radius:3px;border-radius:3px 0 0 3px"></div>
<svg style="left:786px;top:42px" width="26" height="11" viewBox="0 0 26 11"><path d="M1.5 10 L10 1.5 M5 1.5 H10 V6.5 M1.5 6 Q4 3 7 5" stroke="#eee" fill="none" stroke-width="1.2"/><path d="M17 4.5 L18.5 6 L20 4.5" stroke="#ddd" fill="none"/></svg>
<div class="a" style="left:818.3px;top:40.5px;width:26.700000000000045px;height:14px;background:#2c2c2c;border-radius:3px;"></div>
<div class="a" style="left:818.3px;top:40.5px;width:14px;height:14px;background:#4772b3;border-radius:3px;border-radius:3px 0 0 3px"></div>
<svg style="left:819px;top:42px" width="26" height="11" viewBox="0 0 26 11"><circle cx="6.5" cy="5.5" r="4.5" fill="#eee"/><circle cx="5.5" cy="6.5" r="2.6" fill="#4772b3"/><circle cx="9" cy="2.5" r="1.6" fill="#4772b3"/><path d="M16 4.5 L17.5 6 L19 4.5" stroke="#ddd" fill="none"/></svg>
<svg style="left:0;top:0" width="1024" height="576"><circle cx="701.6" cy="74.1" r="10.3" fill="#5b5d60"/><circle cx="724.5" cy="74.1" r="10.3" fill="#5b5d60"/><circle cx="747.3" cy="74.1" r="10.3" fill="#5b5d60"/><circle cx="770.2" cy="74.1" r="10.3" fill="#5b5d60"/><g stroke="#dcdcdc" stroke-width="1.1" fill="none"><rect x="696" y="68.5" width="11.2" height="11.2"/><path d="M699.7 68.5 V79.7 M703.5 68.5 V79.7 M696 72.2 H707.2 M696 76 H707.2"/></g><g fill="#dcdcdc"><circle cx="721" cy="71.5" r="2.6"/><circle cx="726.5" cy="71.5" r="2.6"/><rect x="719" y="73.5" width="9" height="5" rx="0.8"/><path d="M728 76 L731 74 V79 L728 77Z"/></g><circle cx="721" cy="71.5" r="1" fill="#5b5d60"/><circle cx="726.5" cy="71.5" r="1" fill="#5b5d60"/><path d="M743 80.5 Q741 76 741.5 73 L743 73.5 V69.5 Q743.8 68.5 744.6 69.5 V68 Q745.4 67 746.2 68 V68.3 Q747 67.3 747.8 68.3 V69 Q748.6 68.2 749.4 69 V75 L751.5 72.5 Q752.5 72.3 752.5 73.2 L749.5 80.5 Z" fill="#e6e6e6"/><circle cx="772" cy="72.3" r="4" fill="none" stroke="#e6e6e6" stroke-width="1.4"/><path d="M769 75.5 L765 79.5" stroke="#e6e6e6" stroke-width="2" stroke-linecap="round"/><path d="M772 70.2 V74.4 M769.9 72.3 H774.1" stroke="#e6e6e6" stroke-width="1.1"/><path d="M807.6 94.4 V70.3" stroke="#3d8ee8" stroke-width="1.6"/><path d="M807.6 94.4 H831.2" stroke="#8bd11f" stroke-width="1.6"/><circle cx="783.3" cy="94.4" r="4.7" fill="#6e9430"/><circle cx="807.6" cy="118.5" r="4.7" fill="#3b70c0"/><circle cx="807.6" cy="70.3" r="6" fill="#3f8fe9"/><circle cx="807.6" cy="94.4" r="6" fill="#ea3a52"/><circle cx="831.2" cy="94.4" r="6" fill="#8bd11f"/><text x="807.6" y="73.8" font-size="8.5" font-weight="bold" fill="#111" text-anchor="middle" font-family="Liberation Sans">Z</text><text x="807.6" y="97.9" font-size="8.5" font-weight="bold" fill="#111" text-anchor="middle" font-family="Liberation Sans">X</text><text x="831.2" y="97.9" font-size="8.5" font-weight="bold" fill="#111" text-anchor="middle" font-family="Liberation Sans">Y</text><path d="M313 68 h2 a5 5 0 0 1 0 10 h-2z" fill="#8d9399"/><path d="M314.5 70.8 L316.5 73 L314.5 75.2" stroke="#c0c0c0" fill="none"/><path d="M845 68 h-2 a5 5 0 0 0 0 10 h2z" fill="#8d9399"/><path d="M843.5 70.8 L841.5 73 L843.5 75.2" stroke="#c0c0c0" fill="none"/><defs><radialGradient id="ws" cx="0.45" cy="0.4" r="0.65"><stop offset="0" stop-color="#dfddd7"/><stop offset="0.7" stop-color="#d2d0ca"/><stop offset="1" stop-color="#b4b2ac"/></radialGradient><linearGradient id="ms" x1="0" y1="0" x2="0" y2="1"><stop offset="0" stop-color="#3d4a30"/><stop offset="0.12" stop-color="#b8c2bf"/><stop offset="0.3" stop-color="#eef2f2"/><stop offset="0.45" stop-color="#d7dcd6"/><stop offset="0.52" stop-color="#55632d"/><stop offset="0.6" stop-color="#6b6f4a"/><stop offset="0.75" stop-color="#7d766a"/><stop offset="1" stop-color="#4b453c"/></linearGradient><radialGradient id="msv" cx="0.5" cy="0.5" r="0.5"><stop offset="0.65" stop-color="#000" stop-opacity="0"/><stop offset="1" stop-color="#000" stop-opacity="0.5"/></radialGradient></defs><defs><clipPath id="msc"><circle cx="733.4" cy="381.6" r="27.8"/></clipPath><filter id="bl" x="-20%" y="-20%" width="140%" height="140%"><feGaussianBlur stdDeviation="1.6"/></filter></defs><g clip-path="url(#msc)"><rect x="705" y="353" width="57" height="57" fill="#8a8272"/><g filter="url(#bl)"><rect x="700" y="350" width="67" height="8" fill="#5d6a4c"/><ellipse cx="731" cy="368" rx="26" ry="11" fill="#e6eaea"/><ellipse cx="716" cy="371" rx="5" ry="7" fill="#8c9192"/><ellipse cx="727" cy="369" rx="3" ry="4" fill="#a4a9a8"/><ellipse cx="751" cy="364" rx="7" ry="6" fill="#74844f"/><ellipse cx="740" cy="362" rx="4" ry="3" fill="#8f9c70"/><rect x="700" y="377" width="67" height="6" fill="#4e5e2c"/><ellipse cx="750" cy="378" rx="10" ry="4" fill="#6a8a30"/><rect x="700" y="383" width="67" height="12" fill="#85796a"/><ellipse cx="733" cy="392" rx="12" ry="5" fill="#6c6457"/><ellipse cx="718" cy="388" rx="7" ry="4" fill="#9a8f7f"/><rect x="700" y="396" width="67" height="20" fill="#61584b"/></g><circle cx="733.4" cy="381.6" r="27.8" fill="url(#msv)"/></g><circle cx="807.3" cy="382" r="27.6" fill="url(#ws)"/></svg>
<div class="a" style="left:847px;top:38px;width:175px;height:92.5px;background:#282828;border-radius:4px;overflow:hidden"><div class="a" style="left:0;top:35.5px;width:177px;height:15px;background:#2c2c2c"></div><div class="a" style="left:0;top:65.5px;width:177px;height:15px;background:#2c2c2c"></div></div>
<div class="a" style="left:847px;top:38px;width:175px;height:19px;background:#2a2a2a;border-radius:4px;border-radius:4px 4px 0 0"></div>
<div class="a" style="left:855.6px;top:41.2px;width:20px;height:12.5px;background:#303030;border-radius:3px;"></div>
<svg style="left:857px;top:42px" width="19" height="11" viewBox="0 0 19 11"><path d="M1 1 H4 M2 1 V9 M2 5 H4 M2 9 H4" stroke="#ddd"/><rect x="5" y="4" width="6" height="2.3" fill="#ddd"/><rect x="5" y="7.8" width="6" height="2.3" fill="#ddd"/><path d="M13 4.5 L14.5 6 L16 4.5" stroke="#ccc" fill="none"/></svg>
<div class="a" style="left:883.4px;top:41.2px;width:20px;height:12.5px;background:#303030;border-radius:3px;"></div>
<svg style="left:885px;top:42px" width="19" height="11" viewBox="0 0 19 11"><rect x="2.5" y="0.5" width="8" height="8" fill="none" stroke="#ddd"/><rect x="0.5" y="2.5" width="8" height="8" fill="#303030" stroke="#bbb"/><path d="M2 9.5 L4.5 5 L7 9.5Z" fill="#ddd"/><path d="M13 4.5 L14.5 6 L16 4.5" stroke="#ccc" fill="none"/></svg>
<div class="a" style="left:918.2px;top:41.2px;width:81px;height:12.5px;background:#1c1c1c;border-radius:3px;"></div>
<svg style="left:920px;top:42px" width="11" height="11"><circle cx="6.5" cy="4.5" r="3.2" fill="none" stroke="#ddd" stroke-width="1.1"/><path d="M4.3 6.8 L1 10" stroke="#ddd" stroke-width="1.3"/></svg>
<svg style="left:1013px;top:42px" width="11" height="11"><path d="M0.5 1 H10 L6.5 5.5 V10 L4.5 10.5 V5.5Z" fill="none" stroke="#ccc" stroke-width="1.1"/></svg>
<svg style="left:864px;top:60px" width="12" height="12" viewBox="0 0 12 12"><rect x="0.5" y="0.5" width="10.5" height="2.5" fill="none" stroke="#ddd"/><rect x="1.5" y="4" width="8.5" height="7" fill="none" stroke="#ddd"/><rect x="4.5" y="6" width="2.5" height="1.6" fill="#ddd"/></svg>
<div class="t" style="left:880px;top:59.9px;font-size:10.5px;color:#d6d6d6;transform:scaleX(0.82);font-weight:normal;">Scene Collection</div>
<svg style="left:866px;top:78px" width="7" height="6"><path d="M0 0 H7 L3.5 6Z" fill="#ddd"/></svg>
<div class="a" style="left:880.8px;top:77px;width:7.5px;height:8px;background:#e8e8e8;border-radius:1.5px;"></div>
<svg style="left:881px;top:77.5px" width="8" height="7"><path d="M1.2 3.5 L3 5.5 L6.8 1.2" stroke="#222" stroke-width="1.3" fill="none"/></svg>
<div class="a" style="left:892px;top:74.5px;width:15px;height:13px;background:#4b4b4b;border-radius:3px;"></div>
<svg style="left:893.5px;top:75.5px" width="12" height="12" viewBox="0 0 12 12"><rect x="0.5" y="0.5" width="10.5" height="2.5" fill="none" stroke="#ddd"/><rect x="1.5" y="4" width="8.5" height="7" fill="none" stroke="#ddd"/><rect x="4.5" y="6" width="2.5" height="1.6" fill="#ddd"/></svg>
<div class="t" style="left:910.3px;top:74.9px;font-size:10.5px;color:#d6d6d6;transform:scaleX(0.82);font-weight:normal;">Collection</div>
<svg style="left:1004px;top:77px" width="13" height="8"><path d="M0.5 4 Q6.5 -2 12.5 4 Q6.5 10 0.5 4Z" fill="#ddd"/><circle cx="6.5" cy="4" r="2" fill="#282828"/><circle cx="6.5" cy="4" r="0.9" fill="#ddd"/></svg>
<svg style="left:0;top:0" width="1024" height="576"><path d="M884 88 V126 M884 96 H893 M884 111 H893 M884 126 H893" stroke="#9a9a9a" stroke-width="0.8"/></svg>
<div class="t" style="left:910.3px;top:89.9px;font-size:10.5px;color:#6e6e6e;transform:scaleX(0.82);font-weight:normal;">Camera</div>
<svg style="left:1004px;top:94px" width="13" height="5"><path d="M0.5 0.5 Q6.5 6 12.5 0.5" stroke="#9a9a9a" fill="none" stroke-width="1"/></svg>
<div class="t" style="left:910.3px;top:105.0px;font-size:10.5px;color:#6e6e6e;transform:scaleX(0.82);font-weight:normal;">Empty</div>
<svg style="left:1004px;top:109.1px" width="13" height="5"><path d="M0.5 0.5 Q6.5 6 12.5 0.5" stroke="#9a9a9a" fill="none" stroke-width="1"/></svg>
<div class="t" style="left:910.3px;top:119.9px;font-size:10.5px;color:#6e6e6e;transform:scaleX(0.82);font-weight:normal;">Light</div>
<svg style="left:1004px;top:124px" width="13" height="5"><path d="M0.5 0.5 Q6.5 6 12.5 0.5" stroke="#9a9a9a" fill="none" stroke-width="1"/></svg>
<svg style="left:0;top:0" width="1024" height="576"><g opacity="0.55" fill="#e0a050"><circle cx="896" cy="92" r="2.5"/><circle cx="902" cy="92" r="2.5"/><rect x="894" y="94" width="9" height="6"/><path d="M903 96 L906 94 V100 L903 98Z"/><rect x="893.5" y="105" width="12" height="12" rx="1"/><circle cx="899.5" cy="125" r="5"/></g><g opacity="0.55"><path d="M895 115 L898 110 L901 115Z" fill="#333"/><circle cx="902" cy="108" r="1" fill="#333"/></g><rect x="953.8" y="89" width="15.7" height="13.5" rx="3" fill="#3b7b68" opacity="0.85"/><path d="M956.5 94 Q961.5 90 966.5 94 M956.5 97 H966.5" stroke="#7cc7a8" fill="none"/><rect x="951" y="104.5" width="11" height="12" fill="none" stroke="#6b3b48"/><path d="M952.5 115.5 L955.5 110 L958.5 115.5Z" fill="#cf5a78"/><circle cx="956" cy="126" r="4.5" fill="none" stroke="#2f8f5a" stroke-width="1.2"/><circle cx="956" cy="126" r="1.2" fill="#2f8f5a"/></svg>
<div class="a" style="left:847px;top:131.5px;width:175px;height:427.5px;background:#3d3d3d;border-radius:4px;"></div>
<div class="a" style="left:847px;top:131.5px;width:175px;height:18.5px;background:#2e2e2e;border-radius:4px;border-radius:4px 4px 0 0"></div>
<div class="a" style="left:847px;top:150px;width:20px;height:410px;background:#232323;border-radius:0px;"></div>
<div class="a" style="left:847px;top:150px;width:20px;height:317px;background:#2a2a2a;border-radius:0px;"></div>
<div class="a" style="left:854.6px;top:132.5px;width:23px;height:14.5px;background:#383838;border-radius:3px;"></div>
<svg style="left:856px;top:134px" width="20" height="12" viewBox="0 0 20 12"><rect x="0.5" y="0.5" width="10" height="4.5" rx="2" fill="#ddd"/><circle cx="8" cy="2.8" r="1.3" fill="#383838"/><rect x="0.5" y="6.5" width="10" height="4.5" rx="2" fill="#ddd"/><circle cx="3" cy="8.8" r="1.3" fill="#383838"/><path d="M13.5 4.5 L15 6 L16.5 4.5" stroke="#ccc" fill="none"/></svg>
<svg style="left:887px;top:134px" width="12" height="12" viewBox="0 0 12 12"><path d="M4 1 L0.5 9 H6 Z" fill="#ddd"/><circle cx="6.5" cy="8" r="2.8" fill="#2e2e2e" stroke="#ddd" stroke-width="1.2"/><circle cx="8.5" cy="2" r="1.6" fill="#ddd"/></svg>
<div class="t" style="left:903.7px;top:134.4px;font-size:10.5px;color:#e0e0e0;transform:scaleX(0.82);font-weight:normal;">Scene</div>
<svg style="left:950px;top:134px" width="13" height="13" viewBox="0 0 13 13"><circle cx="6.5" cy="6.5" r="5.5" fill="none" stroke="#ddd" stroke-width="1.3"/><path d="M3 3.5 Q5 5 4 7 Q6 9 5 11.5 M8 1.5 Q7 4 9.5 5 Q11 7 10 9" stroke="#ddd" fill="none"/></svg>
<div class="t" style="left:967px;top:134.4px;font-size:10.5px;color:#e0e0e0;transform:scaleX(0.82);font-weight:normal;">World</div>
<svg style="left:1002px;top:134px" width="12" height="12"><path d="M7 1 L11 5 L9 6 L6.5 8.5 L6 11 L1 6 L3.5 5.5 L6 3 Z M3.5 8.5 L0.5 11.5" stroke="#999" fill="none"/></svg>
<svg style="left:0;top:0" width="1024" height="576"><g opacity="0.85"><rect x="848" y="267.5" width="19" height="20" fill="#3d3d3d"/><path d="M853 159 V167 M853 169 V172" stroke="#ddd" stroke-width="2"/><path d="M859 159.5 V172 M856.5 159.5 Q859 163 861.5 159.5" stroke="#ddd" stroke-width="2" fill="none"/><rect x="852" y="186" width="11" height="9" fill="none" stroke="#ddd" stroke-width="1.2"/><rect x="855" y="184" width="5" height="2" fill="#ddd"/><rect x="854" y="189" width="3" height="3" fill="#ddd"/><rect x="851.5" y="209.5" width="12" height="5" fill="#ddd"/><rect x="853.5" y="214.5" width="8" height="6" fill="none" stroke="#ddd"/><rect x="853.5" y="230.5" width="10" height="9" fill="none" stroke="#ddd"/><rect x="851.5" y="232.5" width="10" height="9" fill="#2a2a2a" stroke="#aaa"/><path d="M853 241 L856 236 L859 241Z" fill="#ddd"/><path d="M854 249 L850.5 258 H856Z" fill="#ddd"/><circle cx="857" cy="257" r="3" fill="#2a2a2a" stroke="#ddd" stroke-width="1.2"/><circle cx="859.5" cy="250.5" r="1.6" fill="#ddd"/><circle cx="857.5" cy="277.5" r="6" fill="#c94a4a"/><path d="M853 273 Q857 276 855 280 M859 272 Q858 276 862 277 Q861 281 858 283" stroke="#eee" stroke-width="1.2" fill="none"/><circle cx="857.5" cy="277.5" r="6" fill="none" stroke="#8a2d2d" stroke-width="1"/><rect x="852" y="297.5" width="11" height="11" fill="#e0843c" stroke="#3d2a1a"/><rect x="854.5" y="300" width="6" height="6" fill="#f4a050"/><path d="M852 330 L858 323 M857 319.5 A3.5 3.5 0 1 0 861.5 324" stroke="#5b8fd6" stroke-width="2.2" fill="none"/><g fill="#5b8fd6"><circle cx="852" cy="340" r="1.6"/><circle cx="862" cy="340" r="1.6"/><circle cx="852" cy="350" r="1.6"/><circle cx="862" cy="350" r="1.6"/><circle cx="857" cy="345.5" r="1.6"/></g><path d="M852 340 L862 350 M852 350 L857 345.5" stroke="#5b8fd6"/><circle cx="857.5" cy="367.9" r="5" fill="none" stroke="#5b8fd6" stroke-width="1.6"/><circle cx="857.5" cy="367.9" r="1.8" fill="#5b8fd6"/><circle cx="855.5" cy="390" r="3.5" fill="none" stroke="#5b8fd6" stroke-width="1.5"/><circle cx="859.5" cy="386" r="3.5" fill="none" stroke="#5b8fd6" stroke-width="1.5"/><path d="M851.5 403.5 H863.5 L857.5 414.5Z" fill="none" stroke="#3db868" stroke-width="1.6"/><circle cx="851.5" cy="403.5" r="1.6" fill="#3db868"/><circle cx="863.5" cy="403.5" r="1.6" fill="#3db868"/><circle cx="857.5" cy="414" r="1.6" fill="#3db868"/><circle cx="857.5" cy="430" r="6" fill="#d94c4c"/><path d="M857.5 424 V430 H863.5" fill="#fff"/><path d="M857.5 424 A6 6 0 0 1 863.5 430 H857.5Z" fill="#f2c0c0"/><path d="M851.5 430 A6 6 0 0 0 857.5 436 V430Z" fill="#f2c0c0"/><rect x="852.0" y="452.5" width="2.2" height="2.2" fill="#e05050"/><rect x="852.0" y="454.7" width="2.2" height="2.2" fill="#f4d0d0"/><rect x="852.0" y="456.9" width="2.2" height="2.2" fill="#e05050"/><rect x="852.0" y="459.1" width="2.2" height="2.2" fill="#f4d0d0"/><rect x="852.0" y="461.3" width="2.2" height="2.2" fill="#e05050"/><rect x="854.2" y="452.5" width="2.2" height="2.2" fill="#f4d0d0"/><rect x="854.2" y="454.7" width="2.2" height="2.2" fill="#e05050"/><rect x="854.2" y="456.9" width="2.2" height="2.2" fill="#f4d0d0"/><rect x="854.2" y="459.1" width="2.2" height="2.2" fill="#e05050"/><rect x="854.2" y="461.3" width="2.2" height="2.2" fill="#f4d0d0"/><rect x="856.4" y="452.5" width="2.2" height="2.2" fill="#e05050"/><rect x="856.4" y="454.7" width="2.2" height="2.2" fill="#f4d0d0"/><rect x="856.4" y="456.9" width="2.2" height="2.2" fill="#e05050"/><rect x="856.4" y="459.1" width="2.2" height="2.2" fill="#f4d0d0"/><rect x="856.4" y="461.3" width="2.2" height="2.2" fill="#e05050"/><rect x="858.6" y="452.5" width="2.2" height="2.2" fill="#f4d0d0"/><rect x="858.6" y="454.7" width="2.2" height="2.2" fill="#e05050"/><rect x="858.6" y="456.9" width="2.2" height="2.2" fill="#f4d0d0"/><rect x="858.6" y="459.1" width="2.2" height="2.2" fill="#e05050"/><rect x="858.6" y="461.3" width="2.2" height="2.2" fill="#f4d0d0"/><rect x="860.8" y="452.5" width="2.2" height="2.2" fill="#e05050"/><rect x="860.8" y="454.7" width="2.2" height="2.2" fill="#f4d0d0"/><rect x="860.8" y="456.9" width="2.2" height="2.2" fill="#e05050"/><rect x="860.8" y="459.1" width="2.2" height="2.2" fill="#f4d0d0"/><rect x="860.8" y="461.3" width="2.2" height="2.2" fill="#e05050"/></g></svg>
<div class="a" style="left:875.4px;top:156.7px;width:21px;height:13.5px;background:#2a2a2a;border-radius:3px;"></div>
<svg style="left:877px;top:157.5px" width="19" height="12" viewBox="0 0 19 12"><circle cx="6" cy="6" r="5" fill="none" stroke="#ddd" stroke-width="1.2"/><path d="M3 3 Q5 4.5 4 6.5 Q5.5 8 4.5 10.5 M7.5 1.5 Q6.5 4 9 5" stroke="#ddd" fill="none"/><path d="M13 5 L14.5 6.5 L16 5" stroke="#ccc" fill="none"/></svg>
<div class="a" style="left:896px;top:156.7px;width:76.5px;height:13.5px;background:#1d1d1d;border-radius:0px;"></div>
<div class="t" style="left:901px;top:157.4px;font-size:10.5px;color:#e6e6e6;transform:scaleX(0.82);font-weight:normal;">World</div>
<div class="a" style="left:972.5px;top:156.7px;width:15.5px;height:13.5px;background:#4d4d4d;border-radius:0px;"></div>
<svg style="left:975px;top:158px" width="11" height="11"><path d="M5.5 0.8 L10 2.2 V5.5 Q10 9 5.5 10.5 Q1 9 1 5.5 V2.2Z" fill="none" stroke="#aaa"/></svg>
<div class="a" style="left:988px;top:156.7px;width:14px;height:13.5px;background:#4d4d4d;border-radius:0px;"></div>
<svg style="left:990px;top:158px" width="11" height="11"><rect x="0.5" y="0.5" width="7" height="8" fill="none" stroke="#ddd"/><rect x="3.5" y="3" width="6.5" height="7.5" fill="#4d4d4d" stroke="#ddd"/></svg>
<div class="a" style="left:1002px;top:156.7px;width:15px;height:13.5px;background:#4d4d4d;border-radius:3px;border-radius:0 3px 3px 0"></div>
<svg style="left:1005.5px;top:159.5px" width="8" height="8"><path d="M0.5 0.5 L7.5 7.5 M7.5 0.5 L0.5 7.5" stroke="#ccc" stroke-width="1.1"/></svg>
<svg style="left:873px;top:183px" width="7" height="6"><path d="M0 0 H7 L3.5 6Z" fill="#ccc"/></svg>
<div class="t" style="left:885px;top:180.4px;font-size:10.5px;color:#e0e0e0;transform:scaleX(0.82);font-weight:normal;">Surface</div>
<svg style="left:1004px;top:183px" width="14" height="7"><g fill="#555"><rect x="0" y="0" width="1.5" height="1.5"/><rect x="3" y="0" width="1.5" height="1.5"/><rect x="6" y="0" width="1.5" height="1.5"/><rect x="9" y="0" width="1.5" height="1.5"/><rect x="0" y="3" width="1.5" height="1.5"/><rect x="3" y="3" width="1.5" height="1.5"/><rect x="6" y="3" width="1.5" height="1.5"/><rect x="9" y="3" width="1.5" height="1.5"/></g></svg>
<div class="a" style="left:875.4px;top:202px;width:141.6px;height:13.5px;background:#4a7cc9;border-radius:3px;"></div>
<svg style="left:877px;top:203px" width="12" height="12"><rect x="0.5" y="0.5" width="9" height="4.5" rx="1.5" fill="#eee"/><rect x="0.5" y="6.5" width="9" height="4.5" rx="1.5" fill="#eee"/><path d="M10 3 V9" stroke="#eee"/></svg>
<div class="t" style="left:931.5px;top:202.4px;font-size:10.5px;color:#f2f2f2;transform:scaleX(0.82);font-weight:normal;">Use Nodes</div>
<div class="t" style="left:908px;top:229.4px;font-size:10.5px;color:#d6d6d6;transform:scaleX(0.82);font-weight:normal;">Surface</div>
<div class="a" style="left:950.4px;top:229px;width:52.1px;height:12.7px;background:#282828;border-radius:3px;"></div>
<div class="t" style="left:954.5px;top:229.4px;font-size:10.5px;color:#e6e6e6;transform:scaleX(0.8);font-weight:normal;">Background</div>
<svg style="left:1005px;top:230.5px" width="10" height="10"><circle cx="5" cy="5" r="2.5" fill="none" stroke="#ccc" stroke-width="1.2"/></svg>
<div class="t" style="left:916.5px;top:256.4px;font-size:10.5px;color:#d6d6d6;transform:scaleX(0.82);font-weight:normal;">Color</div>
<div class="a" style="left:950.4px;top:255.5px;width:52.1px;height:13.5px;background:#333333;border-radius:3px;"></div>
<svg style="left:1005px;top:257.5px" width="10" height="10"><circle cx="5" cy="5" r="2.5" fill="none" stroke="#ccc" stroke-width="1.2"/></svg>
<div class="t" style="left:905.5px;top:274.9px;font-size:10.5px;color:#d6d6d6;transform:scaleX(0.82);font-weight:normal;">Strength</div>
<div class="a" style="left:950.4px;top:274.5px;width:52.1px;height:13.5px;background:#585858;border-radius:3px;"></div>
<div class="t" style="left:963.5px;top:274.9px;font-size:10.5px;color:#ececec;transform:scaleX(0.82);font-weight:normal;">1.000</div>
<svg style="left:1005px;top:276px" width="10" height="10"><circle cx="5" cy="5" r="2.5" fill="none" stroke="#ccc" stroke-width="1.2"/></svg>
<svg style="left:874px;top:300.75px" width="6" height="7"><path d="M0 0 V7 L6 3.5Z" fill="#aaa"/></svg>
<div class="t" style="left:885px;top:297.7px;font-size:10.5px;color:#e0e0e0;transform:scaleX(0.82);font-weight:normal;">Volume</div>
<svg style="left:1004px;top:300.75px" width="14" height="7"><g fill="#555"><rect x="0" y="0" width="1.5" height="1.5"/><rect x="3" y="0" width="1.5" height="1.5"/><rect x="6" y="0" width="1.5" height="1.5"/><rect x="9" y="0" width="1.5" height="1.5"/><rect x="0" y="3" width="1.5" height="1.5"/><rect x="3" y="3" width="1.5" height="1.5"/><rect x="6" y="3" width="1.5" height="1.5"/><rect x="9" y="3" width="1.5" height="1.5"/></g></svg>
<svg style="left:874px;top:319.5px" width="6" height="7"><path d="M0 0 V7 L6 3.5Z" fill="#aaa"/></svg>
<div class="t" style="left:885px;top:316.4px;font-size:10.5px;color:#e0e0e0;transform:scaleX(0.82);font-weight:normal;">Viewport Display</div>
<svg style="left:1004px;top:319.5px" width="14" height="7"><g fill="#555"><rect x="0" y="0" width="1.5" height="1.5"/><rect x="3" y="0" width="1.5" height="1.5"/><rect x="6" y="0" width="1.5" height="1.5"/><rect x="9" y="0" width="1.5" height="1.5"/><rect x="0" y="3" width="1.5" height="1.5"/><rect x="3" y="3" width="1.5" height="1.5"/><rect x="6" y="3" width="1.5" height="1.5"/><rect x="9" y="3" width="1.5" height="1.5"/></g></svg>
<svg style="left:874px;top:337px" width="6" height="7"><path d="M0 0 V7 L6 3.5Z" fill="#aaa"/></svg>
<div class="t" style="left:885px;top:333.9px;font-size:10.5px;color:#e0e0e0;transform:scaleX(0.82);font-weight:normal;">Custom Properties</div>
<svg style="left:1004px;top:337px" width="14" height="7"><g fill="#555"><rect x="0" y="0" width="1.5" height="1.5"/><rect x="3" y="0" width="1.5" height="1.5"/><rect x="6" y="0" width="1.5" height="1.5"/><rect x="9" y="0" width="1.5" height="1.5"/><rect x="0" y="3" width="1.5" height="1.5"/><rect x="3" y="3" width="1.5" height="1.5"/><rect x="6" y="3" width="1.5" height="1.5"/><rect x="9" y="3" width="1.5" height="1.5"/></g></svg>
<div class="a" style="left:0;top:420px;width:311px;height:139px;background:#3d3d3d;border-radius:0 4px 4px 0;overflow:hidden"><div class="a" style="left:0;top:0;width:311px;height:19px;background:#303030"></div><div class="a" style="left:15.6px;top:19.5px;width:242.4px;height:119.5px;background:#000"></div><div class="a" style="left:0;top:19.5px;width:15.6px;height:120px;background:#464646"></div></div>
<svg style="left:0;top:0" width="1024" height="576"><defs><clipPath id="ic"><rect x="15.6" y="439.5" width="242.4" height="119.5"/></clipPath></defs><g clip-path="url(#ic)"><path d="M15 439 L63.2 440.2 Q63 444 61 444.7 L53 447 Q46 449 45.1 450.3 Q41.5 453 41.8 454.8 L42.9 463.9 Q44 470 48.5 475.1 L54.2 479.7 Q57 481 58.7 484.2 Q61.5 488 62.1 493.2 L63.2 506.7 Q63 514 59.8 519.2 Q57 525 53 528.2 Q50 530 46.3 529.3 Q42 528 39.5 525.9 L33.9 520.3 Q30 517.5 24.8 516.9 Q21 515 19.2 512.4 Q17 508 16.9 502.2 L15 495.5Z" fill="#6b2d29"/><path d="M105 560 L106.1 538.4 L108.4 520.3 Q109.5 511 111.7 507.9 Q114 503.5 117.4 502.7 L135.4 502.2 Q142 503 144.5 505.6 Q147.5 509 147.9 513.5 Q147 519 146.7 523.7 Q148 527 150.1 529.3 Q153.5 533 154.6 538.4 Q156 544 155.8 549.6 L153.5 560Z" fill="#6b2d29"/><path d="M111.7 507.9 Q114 503.5 117.4 502.7 L135.4 502.2 Q142 503 144.5 505.6" stroke="#8a6ad8" stroke-width="1.6" fill="none" opacity="0.75"/><path d="M106.1 538.4 L105.5 552" stroke="#8a6ad8" stroke-width="1.2" fill="none" opacity="0.5"/></g></svg>
<svg style="left:0;top:0" width="1024" height="576"><path d="M0 450 h1.5 a4 4 0 0 1 0 12 h-1.5z" fill="#555"/><path d="M1.5 453 L3.5 456 L1.5 459" stroke="#aaa" fill="none"/></svg>
<div class="a" style="left:9px;top:423.5px;width:20px;height:14px;background:#282828;border-radius:3px;"></div>
<svg style="left:10px;top:424px" width="18" height="12" viewBox="0 0 18 12"><rect x="0.5" y="0.5" width="10" height="10.5" fill="none" stroke="#ccc"/><path d="M2.5 2.5 H8.5 V4.5 H6.5 V9 H4.5 V4.5 H2.5Z" fill="#eee"/><path d="M12.5 4.5 L14 6 L15.5 4.5" stroke="#ccc" fill="none"/></svg>
<svg style="left:36px;top:424px" width="13" height="12" viewBox="0 0 13 12"><rect x="0.5" y="0.5" width="11" height="11" fill="none" stroke="#ccc"/><path d="M2 10.5 L5.5 4.5 L9 10.5Z" fill="#eee"/><circle cx="8.5" cy="3" r="1.2" fill="#eee"/></svg>
<div class="t" style="left:53px;top:424.9px;font-size:10.5px;color:#d8d8d8;transform:scaleX(0.82);font-weight:normal;">View</div>
<svg style="left:75px;top:429px" width="7" height="5"><path d="M0.5 0.5 L3.5 3.5 L6.5 0.5" stroke="#ccc" fill="none"/></svg>
<svg style="left:88.5px;top:425px" width="12" height="11"><path d="M0.5 1.5 H11 M0.5 5.5 H11 M0.5 9.5 H11" stroke="#ddd" stroke-width="1.5"/></svg>
<div class="a" style="left:115px;top:423.5px;width:22px;height:14px;background:#2c2c2c;border-radius:3px;"></div>
<svg style="left:116.5px;top:424px" width="19" height="12" viewBox="0 0 19 12"><rect x="0.5" y="0.5" width="10.5" height="11" fill="none" stroke="#ccc"/><path d="M1.5 10.5 L5 4.5 L8.5 10.5Z" fill="#eee"/><circle cx="8" cy="3" r="1.2" fill="#eee"/><path d="M13 4.5 L14.5 6 L16 4.5" stroke="#ccc" fill="none"/></svg>
<div class="a" style="left:138px;top:423.8px;width:88.4px;height:14.2px;background:#1c1c1c;border-radius:0px;"></div>
<div class="t" style="left:143px;top:424.9px;font-size:10.5px;color:#d8d8d8;transform:scaleX(0.82);font-weight:normal;">Untitled</div>
<div class="a" style="left:226.4px;top:423.8px;width:15.6px;height:14.2px;background:#4a4a4a;border-radius:0px;"></div>
<svg style="left:229px;top:425.5px" width="11" height="11"><path d="M5.5 0.8 L10 2.2 V5.5 Q10 9 5.5 10.5 Q1 9 1 5.5 V2.2Z" fill="none" stroke="#888"/></svg>
<div class="a" style="left:242px;top:423.8px;width:14px;height:14.2px;background:#4a4a4a;border-radius:0px;"></div>
<svg style="left:244px;top:425px" width="11" height="11"><rect x="0.5" y="0.5" width="7" height="8" fill="none" stroke="#ddd"/><rect x="3.5" y="3" width="6.5" height="7.5" fill="#4a4a4a" stroke="#ddd"/></svg>
<div class="a" style="left:256px;top:423.8px;width:15px;height:14.2px;background:#4a4a4a;border-radius:0px;"></div>
<svg style="left:258px;top:425.5px" width="12" height="11"><rect x="0.5" y="3.5" width="10" height="7" fill="#ddd"/><rect x="2.5" y="1" width="7" height="3" fill="#ddd" stroke="#4a4a4a"/><path d="M0.5 6.5 H10.5" stroke="#4a4a4a"/></svg>
<div class="a" style="left:271px;top:423.8px;width:16px;height:14.2px;background:#4a4a4a;border-radius:3px;border-radius:0 3px 3px 0"></div>
<svg style="left:275px;top:427px" width="8" height="8"><path d="M0.5 0.5 L7.5 7.5 M7.5 0.5 L0.5 7.5" stroke="#bbb" stroke-width="1.1"/></svg>
<svg style="left:294px;top:425px" width="11" height="12"><path d="M6.5 1 L10.5 5 L8.5 6 L6 8.5 L5.5 11 L0.5 6 L3 5.5 L5.5 3 Z M3 8.5 L0.3 11.5" stroke="#888" fill="none"/></svg>
<svg style="left:0;top:0" width="1024" height="576"><circle cx="271.3" cy="456.2" r="9.3" fill="#2f2f2f"/><circle cx="293.7" cy="456.2" r="9.3" fill="#2f2f2f"/><path d="M267.5 462.5 Q265.5 458 266 455 L267.5 455.5 V451.5 Q268.3 450.5 269.1 451.5 V450 Q269.9 449 270.7 450 V450.3 Q271.5 449.3 272.3 450.3 V451 Q273.1 450.2 273.9 451 V457 L276 454.5 Q277 454.3 277 455.2 L274 462.5 Z" fill="#e6e6e6"/><circle cx="295.5" cy="454.4" r="4" fill="none" stroke="#e6e6e6" stroke-width="1.4"/><path d="M292.5 457.6 L288.5 461.6" stroke="#e6e6e6" stroke-width="2" stroke-linecap="round"/><path d="M295.5 452.3 V456.5 M293.4 454.4 H297.6" stroke="#e6e6e6" stroke-width="1.1"/><path d="M309 452 L306 456 L309 460" stroke="#777" fill="none"/></svg>
<div class="a" style="left:313px;top:420px;width:532px;height:140px;background:#272727;border-radius:4px;overflow:hidden"><svg style="left:-313px;top:-420px" width="1024" height="576"><path d="M314.3 420 V560" stroke="#1a1a1a"/><path d="M324.3 420 V560" stroke="#202020"/><path d="M334.3 420 V560" stroke="#202020"/><path d="M344.3 420 V560" stroke="#202020"/><path d="M354.3 420 V560" stroke="#202020"/><path d="M364.3 420 V560" stroke="#1a1a1a"/><path d="M374.3 420 V560" stroke="#202020"/><path d="M384.3 420 V560" stroke="#202020"/><path d="M394.3 420 V560" stroke="#202020"/><path d="M404.3 420 V560" stroke="#202020"/><path d="M414.3 420 V560" stroke="#1a1a1a"/><path d="M424.3 420 V560" stroke="#202020"/><path d="M434.3 420 V560" stroke="#202020"/><path d="M444.3 420 V560" stroke="#202020"/><path d="M454.3 420 V560" stroke="#202020"/><path d="M464.3 420 V560" stroke="#1a1a1a"/><path d="M474.3 420 V560" stroke="#202020"/><path d="M484.3 420 V560" stroke="#202020"/><path d="M494.3 420 V560" stroke="#202020"/><path d="M504.3 420 V560" stroke="#202020"/><path d="M514.3 420 V560" stroke="#1a1a1a"/><path d="M524.3 420 V560" stroke="#202020"/><path d="M534.3 420 V560" stroke="#202020"/><path d="M544.3 420 V560" stroke="#202020"/><path d="M554.3 420 V560" stroke="#202020"/><path d="M564.3 420 V560" stroke="#1a1a1a"/><path d="M574.3 420 V560" stroke="#202020"/><path d="M584.3 420 V560" stroke="#202020"/><path d="M594.3 420 V560" stroke="#202020"/><path d="M604.3 420 V560" stroke="#202020"/><path d="M614.3 420 V560" stroke="#1a1a1a"/><path d="M624.3 420 V560" stroke="#202020"/><path d="M634.3 420 V560" stroke="#202020"/><path d="M644.3 420 V560" stroke="#202020"/><path d="M654.3 420 V560" stroke="#202020"/><path d="M664.3 420 V560" stroke="#1a1a1a"/><path d="M674.3 420 V560" stroke="#202020"/><path d="M684.3 420 V560" stroke="#202020"/><path d="M694.3 420 V560" stroke="#202020"/><path d="M704.3 420 V560" stroke="#202020"/><path d="M714.3 420 V560" stroke="#1a1a1a"/><path d="M724.3 420 V560" stroke="#202020"/><path d="M734.3 420 V560" stroke="#202020"/><path d="M744.3 420 V560" stroke="#202020"/><path d="M754.3 420 V560" stroke="#202020"/><path d="M764.3 420 V560" stroke="#1a1a1a"/><path d="M774.3 420 V560" stroke="#202020"/><path d="M784.3 420 V560" stroke="#202020"/><path d="M794.3 420 V560" stroke="#202020"/><path d="M804.3 420 V560" stroke="#202020"/><path d="M814.3 420 V560" stroke="#1a1a1a"/><path d="M824.3 420 V560" stroke="#202020"/><path d="M834.3 420 V560" stroke="#202020"/><path d="M844.3 420 V560" stroke="#202020"/><path d="M313 425.7 H845" stroke="#202020"/><path d="M313 435.7 H845" stroke="#202020"/><path d="M313 445.7 H845" stroke="#202020"/><path d="M313 455.7 H845" stroke="#202020"/><path d="M313 465.7 H845" stroke="#1a1a1a"/><path d="M313 475.7 H845" stroke="#202020"/><path d="M313 485.7 H845" stroke="#202020"/><path d="M313 495.7 H845" stroke="#202020"/><path d="M313 505.7 H845" stroke="#202020"/><path d="M313 515.7 H845" stroke="#1a1a1a"/><path d="M313 525.7 H845" stroke="#202020"/><path d="M313 535.7 H845" stroke="#202020"/><path d="M313 545.7 H845" stroke="#202020"/><path d="M313 555.7 H845" stroke="#202020"/></svg></div>
<div class="a" style="left:313px;top:420px;width:532px;height:19px;background:#303030;border-radius:4px;border-radius:4px 4px 0 0"></div>
<svg style="left:321px;top:424.5px" width="22" height="12" viewBox="0 0 22 12"><circle cx="6.5" cy="6" r="5.2" fill="none" stroke="#ddd" stroke-width="1.3"/><circle cx="5.5" cy="5" r="2.2" fill="#ddd"/><path d="M14 4.5 L15.5 6 L17 4.5" stroke="#ccc" fill="none"/></svg>
<div class="a" style="left:348px;top:424.5px;width:63.5px;height:12px;background:#282828;border-radius:3px;"></div>
<svg style="left:351px;top:425px" width="12" height="11"><path d="M0.5 3 V0.5 H3 M8.5 0.5 H11 V3 M11 8 V10.5 H8.5 M3 10.5 H0.5 V8" stroke="#ccc" fill="none"/><rect x="2.5" y="2.5" width="6.5" height="6.5" fill="#eee"/></svg>
<div class="t" style="left:366px;top:424.4px;font-size:10.5px;color:#e0e0e0;transform:scaleX(0.83);font-weight:normal;">Object</div>
<svg style="left:404px;top:428.5px" width="7" height="5"><path d="M0.5 0.5 L3.5 3.5 L6.5 0.5" stroke="#ccc" fill="none"/></svg>
<div class="t" style="left:421.6px;top:424.4px;font-size:10.5px;color:#e0e0e0;transform:scaleX(0.83);font-weight:normal;">View</div>
<div class="t" style="left:452px;top:424.4px;font-size:10.5px;color:#e0e0e0;transform:scaleX(0.83);font-weight:normal;">Select</div>
<div class="t" style="left:486.5px;top:424.4px;font-size:10.5px;color:#e0e0e0;transform:scaleX(0.83);font-weight:normal;">Add</div>
<div class="t" style="left:512.5px;top:424.4px;font-size:10.5px;color:#e0e0e0;transform:scaleX(0.83);font-weight:normal;">Node</div>
<div class="a" style="left:544px;top:425px;width:9.5px;height:10px;background:#4772b3;border-radius:2px;"></div>
<svg style="left:545px;top:426px" width="8" height="8"><path d="M1.2 4 L3.2 6.2 L7 1.5" stroke="#fff" stroke-width="1.3" fill="none"/></svg>
<div class="t" style="left:560px;top:424.4px;font-size:10.5px;color:#e0e0e0;transform:scaleX(0.83);font-weight:normal;">Use Nodes</div>
<div class="a" style="left:618px;top:424.5px;width:55px;height:12px;background:#282828;border-radius:3px;"></div>
<div class="t" style="left:624px;top:424.4px;font-size:10.5px;color:#e0e0e0;transform:scaleX(0.83);font-weight:normal;">Slot 1</div>
<svg style="left:663px;top:428.5px" width="7" height="5"><path d="M0.5 0.5 L3.5 3.5 L6.5 0.5" stroke="#ccc" fill="none"/></svg>
<div class="a" style="left:683px;top:424.5px;width:21px;height:12px;background:#2a2a2a;border-radius:3px;"></div>
<svg style="left:685px;top:424.5px" width="19" height="12" viewBox="0 0 19 12"><circle cx="6" cy="6" r="5" fill="#eee"/><path d="M6 1 A5 5 0 0 1 11 6 H6Z" fill="#444"/><path d="M1 6 A5 5 0 0 0 6 11 V6Z" fill="#444"/><path d="M13 4.5 L14.5 6 L16 4.5" stroke="#ccc" fill="none"/></svg>
<div class="a" style="left:705px;top:424.5px;width:90px;height:12.5px;background:#1c1c1c;border-radius:0px;"></div>
<div class="t" style="left:710.5px;top:424.4px;font-size:10.5px;color:#e0e0e0;transform:scaleX(0.83);font-weight:normal;">Material</div>
<div class="a" style="left:795px;top:424.5px;width:15px;height:12.5px;background:#4a4a4a;border-radius:0px;"></div>
<svg style="left:797.5px;top:425.5px" width="11" height="11"><path d="M5.5 0.8 L10 2.2 V5.5 Q10 9 5.5 10.5 Q1 9 1 5.5 V2.2Z" fill="none" stroke="#888"/></svg>
<div class="a" style="left:810px;top:424.5px;width:14px;height:12.5px;background:#4a4a4a;border-radius:0px;"></div>
<svg style="left:812px;top:425px" width="11" height="11"><rect x="0.5" y="0.5" width="7" height="8" fill="none" stroke="#ddd"/><rect x="3.5" y="3" width="6.5" height="7.5" fill="#4a4a4a" stroke="#ddd"/></svg>
<div class="a" style="left:824px;top:424.5px;width:15px;height:12.5px;background:#4a4a4a;border-radius:3px;border-radius:0 3px 3px 0"></div>
<svg style="left:828px;top:427px" width="8" height="8"><path d="M0.5 0.5 L7.5 7.5 M7.5 0.5 L0.5 7.5" stroke="#bbb" stroke-width="1.1"/></svg>
<svg style="left:0;top:0" width="1024" height="576"><path d="M313 452 h1.5 a4 4 0 0 1 0 12 h-1.5z" fill="#3a3a3a"/><path d="M314.5 455 L316.5 458 L314.5 461" stroke="#aaa" fill="none"/><path d="M845 452 h-2 a4 4 0 0 0 0 12 h2z" fill="#3a3a3a"/><path d="M843.5 455 L841 458 L843.5 461" stroke="#aaa" fill="none"/></svg>
<div class="a" style="left:332.6px;top:437px;width:117.7px;height:64.5px;background:#3e3e3e;border-radius:3px;border:1px solid #e6e6e6;border-top:none;border-radius:0 0 4px 4px"></div>
<div class="a" style="left:313px;top:437px;width:532px;height:2px;background:#303030;border-radius:0px;"></div>
<div class="a" style="left:338.8px;top:441.4px;width:105.5px;height:7.5px;background:#2a2a2a;border-radius:2px;"></div>
<div class="t" style="left:341.5px;top:440.7px;font-size:8px;color:#cfcfcf;transform:scaleX(0.84);font-weight:normal;">Flat</div>
<svg style="left:438px;top:443.59999999999997px" width="5" height="4"><path d="M0.5 0.5 L2.5 2.5 L4.5 0.5" stroke="#aaa" fill="none"/></svg>
<div class="a" style="left:338.8px;top:454px;width:105.5px;height:7.5px;background:#2a2a2a;border-radius:2px;"></div>
<div class="t" style="left:341.5px;top:453.3px;font-size:8px;color:#cfcfcf;transform:scaleX(0.84);font-weight:normal;">Repeat</div>
<svg style="left:438px;top:456.2px" width="5" height="4"><path d="M0.5 0.5 L2.5 2.5 L4.5 0.5" stroke="#aaa" fill="none"/></svg>
<div class="a" style="left:338.8px;top:465.7px;width:105.5px;height:7.5px;background:#2a2a2a;border-radius:2px;"></div>
<div class="t" style="left:341.5px;top:465.0px;font-size:8px;color:#cfcfcf;transform:scaleX(0.84);font-weight:normal;">Single Image</div>
<svg style="left:438px;top:467.9px" width="5" height="4"><path d="M0.5 0.5 L2.5 2.5 L4.5 0.5" stroke="#aaa" fill="none"/></svg>
<div class="t" style="left:341.5px;top:477.4px;font-size:8px;color:#cfcfcf;transform:scaleX(0.84);font-weight:normal;">Color Space</div>
<div class="a" style="left:393.5px;top:478px;width:50.8px;height:8px;background:#2a2a2a;border-radius:2px;"></div>
<div class="t" style="left:396.5px;top:477.4px;font-size:8px;color:#cfcfcf;transform:scaleX(0.84);font-weight:normal;">sRGB</div>
<svg style="left:438px;top:480.5px" width="5" height="4"><path d="M0.5 0.5 L2.5 2.5 L4.5 0.5" stroke="#aaa" fill="none"/></svg>
<div class="t" style="left:341.5px;top:490.0px;font-size:8px;color:#cfcfcf;transform:scaleX(0.84);font-weight:normal;">Vector</div>
<svg style="left:0;top:0" width="1024" height="576"><circle cx="333" cy="494.6" r="1.8" fill="#6363c7"/></svg>
<div class="t" style="left:335px;top:529.2px;font-size:10px;color:#e0e0e0;transform:scaleX(0.84);font-weight:normal;">Material</div>
<div class="a" style="left:474.5px;top:437px;width:116px;height:122px;background:#3b3b3b;border-radius:0px;"></div>
<div class="a" style="left:313px;top:437px;width:532px;height:2px;background:#303030;border-radius:0px;"></div>
<div class="a" style="left:480.3px;top:443px;width:105.5px;height:7.5px;background:#2e2e2e;border-radius:2px;"></div>
<div class="t" style="left:483px;top:442.1px;font-size:8px;color:#cfcfcf;transform:scaleX(0.84);font-weight:normal;">Subsurface Radius</div>
<svg style="left:579px;top:445px" width="5" height="4"><path d="M0.5 0.5 L2.5 2.5 L4.5 0.5" stroke="#aaa" fill="none"/></svg>
<div class="t" style="left:483px;top:452.4px;font-size:8px;color:#cfcfcf;transform:scaleX(0.78);font-weight:normal;">Subsurface Color</div>
<div class="a" style="left:535px;top:453.7px;width:50.8px;height:7.2px;background:#f2f2f2;border-radius:2px;"></div>
<div class="a" style="left:480.3px;top:463.3px;width:105.5px;height:8px;background:#545454;border-radius:2px;"></div>
<div class="t" style="left:483px;top:462.7px;font-size:8px;color:#d6d6d6;transform:scaleX(0.84);font-weight:normal;">Metallic:</div>
<div class="t" style="left:565px;top:462.7px;font-size:8px;color:#d6d6d6;transform:scaleX(0.84);font-weight:normal;">0.000</div>
<div class="a" style="left:480.3px;top:474.5px;width:105.5px;height:8px;background:#545454;border-radius:2px;"></div>
<div class="a" style="left:480.3px;top:474.5px;width:52px;height:8px;background:#4772b3;border-radius:2px;border-radius:2px 0 0 2px"></div>
<div class="t" style="left:483px;top:473.9px;font-size:8px;color:#d6d6d6;transform:scaleX(0.84);font-weight:normal;">Specular:</div>
<div class="t" style="left:565px;top:473.9px;font-size:8px;color:#d6d6d6;transform:scaleX(0.84);font-weight:normal;">0.500</div>
<div class="a" style="left:480.3px;top:485.2px;width:105.5px;height:8px;background:#545454;border-radius:2px;"></div>
<div class="t" style="left:483px;top:484.6px;font-size:8px;color:#d6d6d6;transform:scaleX(0.84);font-weight:normal;">Specular Tint:</div>
<div class="t" style="left:565px;top:484.6px;font-size:8px;color:#d6d6d6;transform:scaleX(0.84);font-weight:normal;">0.000</div>
<div class="a" style="left:480.3px;top:495.8px;width:105.5px;height:8px;background:#545454;border-radius:2px;"></div>
<div class="a" style="left:480.3px;top:495.8px;width:52px;height:8px;background:#4772b3;border-radius:2px;border-radius:2px 0 0 2px"></div>
<div class="t" style="left:483px;top:495.2px;font-size:8px;color:#d6d6d6;transform:scaleX(0.84);font-weight:normal;">Roughness:</div>
<div class="t" style="left:565px;top:495.2px;font-size:8px;color:#d6d6d6;transform:scaleX(0.84);font-weight:normal;">0.500</div>
<div class="a" style="left:480.3px;top:506.4px;width:105.5px;height:8px;background:#545454;border-radius:2px;"></div>
<div class="t" style="left:483px;top:505.8px;font-size:8px;color:#d6d6d6;transform:scaleX(0.84);font-weight:normal;">Anisotropic:</div>
<div class="t" style="left:565px;top:505.8px;font-size:8px;color:#d6d6d6;transform:scaleX(0.84);font-weight:normal;">0.000</div>
<div class="a" style="left:480.3px;top:516.5px;width:105.5px;height:8px;background:#545454;border-radius:2px;"></div>
<div class="t" style="left:483px;top:515.9px;font-size:8px;color:#d6d6d6;transform:scaleX(0.84);font-weight:normal;">Anisotropic Rotation:</div>
<div class="t" style="left:565px;top:515.9px;font-size:8px;color:#d6d6d6;transform:scaleX(0.84);font-weight:normal;">0.000</div>
<div class="a" style="left:480.3px;top:527px;width:105.5px;height:8px;background:#545454;border-radius:2px;"></div>
<div class="t" style="left:483px;top:526.4px;font-size:8px;color:#d6d6d6;transform:scaleX(0.84);font-weight:normal;">Sheen:</div>
<div class="t" style="left:565px;top:526.4px;font-size:8px;color:#d6d6d6;transform:scaleX(0.84);font-weight:normal;">0.000</div>
<div class="a" style="left:480.3px;top:537.5px;width:105.5px;height:8px;background:#545454;border-radius:2px;"></div>
<div class="a" style="left:480.3px;top:537.5px;width:52px;height:8px;background:#4772b3;border-radius:2px;border-radius:2px 0 0 2px"></div>
<div class="t" style="left:483px;top:536.9px;font-size:8px;color:#d6d6d6;transform:scaleX(0.84);font-weight:normal;">Sheen Tint:</div>
<div class="t" style="left:565px;top:536.9px;font-size:8px;color:#d6d6d6;transform:scaleX(0.84);font-weight:normal;">0.500</div>
<div class="a" style="left:480.3px;top:547.5px;width:105.5px;height:8px;background:#545454;border-radius:2px;"></div>
<div class="t" style="left:483px;top:546.9px;font-size:8px;color:#d6d6d6;transform:scaleX(0.84);font-weight:normal;">Clearcoat:</div>
<div class="t" style="left:565px;top:546.9px;font-size:8px;color:#d6d6d6;transform:scaleX(0.84);font-weight:normal;">0.000</div>
<svg style="left:0;top:0" width="1024" height="576"><circle cx="474.5" cy="467.3" r="1.8" fill="#a1a1a1"/><circle cx="474.5" cy="478.5" r="1.8" fill="#a1a1a1"/><circle cx="474.5" cy="489.2" r="1.8" fill="#a1a1a1"/><circle cx="474.5" cy="499.8" r="1.8" fill="#a1a1a1"/><circle cx="474.5" cy="510.4" r="1.8" fill="#a1a1a1"/><circle cx="474.5" cy="520.5" r="1.8" fill="#a1a1a1"/><circle cx="474.5" cy="531" r="1.8" fill="#a1a1a1"/><circle cx="474.5" cy="541.5" r="1.8" fill="#a1a1a1"/><circle cx="474.5" cy="551.5" r="1.8" fill="#a1a1a1"/><circle cx="474.5" cy="446.7" r="1.8" fill="#6363c7"/><circle cx="474.5" cy="457" r="1.8" fill="#c7c729"/></svg>
<div class="a" style="left:0px;top:560px;width:1024px;height:16px;background:#232323;border-radius:0px;"></div>
<svg style="left:9px;top:562px" width="9" height="12"><rect x="0.6" y="0.6" width="7.5" height="10.5" rx="3.2" fill="none" stroke="#bbb" stroke-width="1.1"/><path d="M4.3 1 V4.5" stroke="#bbb"/><rect x="1" y="1" width="3.3" height="3.5" fill="#bbb"/></svg>
<svg style="left:186px;top:562px" width="9" height="12"><rect x="0.6" y="0.6" width="7.5" height="10.5" rx="3.2" fill="none" stroke="#bbb" stroke-width="1.1"/><path d="M4.3 1 V4.5" stroke="#bbb"/><rect x="1" y="1" width="3.3" height="3.5" fill="#bbb"/></svg>
<svg style="left:363px;top:562px" width="9" height="12"><rect x="0.6" y="0.6" width="7.5" height="10.5" rx="3.2" fill="none" stroke="#bbb" stroke-width="1.1"/><path d="M4.3 1 V4.5" stroke="#bbb"/><rect x="1" y="1" width="3.3" height="3.5" fill="#bbb"/></svg>
<div class="a" style="left:221px;top:574px;width:37px;height:2px;background:#555;border-radius:0px;"></div>
<div class="t" style="left:646px;top:562.4px;font-size:10.5px;color:#c8c8c8;transform:scaleX(0.82);font-weight:normal;">Collection | Plane | Verts:979 | Faces:916 | Tris:1,886 | Objects:0/1 | Mem: 81.3 MB | v2.80.75</div>
</body></html>
